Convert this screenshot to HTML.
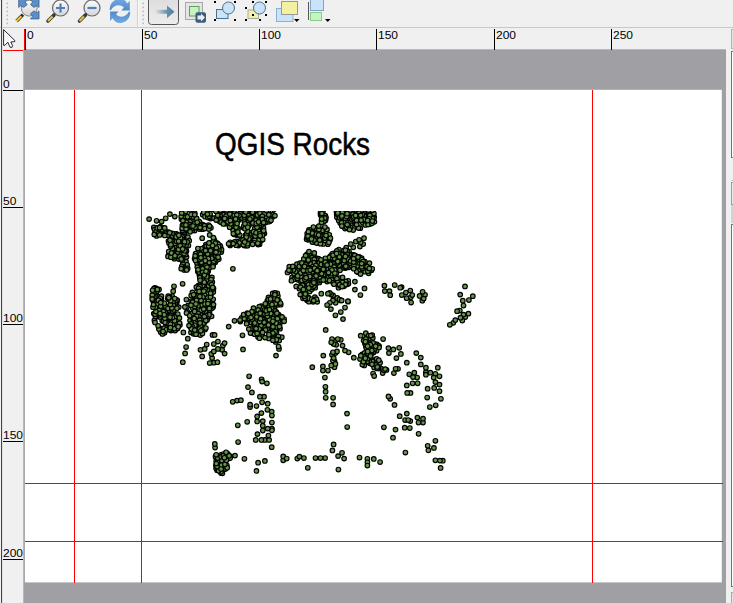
<!DOCTYPE html>
<html><head><meta charset="utf-8"><title>QGIS Composer</title>
<style>
html,body{margin:0;padding:0;background:#f0f0f0;}
body{width:733px;height:603px;overflow:hidden;position:relative;font-family:"Liberation Sans",sans-serif;}
#root{position:absolute;left:0;top:0;width:733px;height:603px;overflow:hidden;background:#f0f0f0;}
.abs{position:absolute;}
.vt{position:absolute;top:29px;width:1px;height:21px;background:#000;}
.ht{position:absolute;left:3px;width:20px;height:1px;background:#000;}
.rl{position:absolute;font-size:12px;line-height:12px;color:#000;white-space:nowrap;transform-origin:0 100%;transform:scaleY(0.93);}
.guide{position:absolute;background:#f00;}
</style></head><body><div id="root">
<!-- toolbar -->
<div class="abs" style="left:0;top:0;width:733px;height:27px;background:#f0f0f0;"></div>
<div class="abs" style="left:0;top:27px;width:733px;height:1px;background:#c8c8c8;"></div>
<svg class="abs" style="left:0;top:0" width="733" height="28" viewBox="0 0 733 28">
<defs>
<linearGradient id="lens" x1="0" y1="0" x2="0" y2="1"><stop offset="0" stop-color="#fdfdfd"/><stop offset="1" stop-color="#d4d4d4"/></linearGradient>
<linearGradient id="btn" x1="0" y1="0" x2="0" y2="1"><stop offset="0" stop-color="#dcdcdc"/><stop offset="1" stop-color="#ececec"/></linearGradient>
<linearGradient id="arr" x1="0" y1="0" x2="1" y2="0"><stop offset="0" stop-color="#5b87a6" stop-opacity="0"/><stop offset="0.6" stop-color="#5b87a6" stop-opacity="0.9"/><stop offset="1" stop-color="#4f7d9e"/></linearGradient>
<linearGradient id="rf" gradientUnits="userSpaceOnUse" x1="0" y1="0" x2="0" y2="22"><stop offset="0" stop-color="#6ea6e0"/><stop offset="1" stop-color="#2f6cb6"/></linearGradient>
</defs>
<!-- grippers -->
<g><rect x="5.5" y="1.7" width="1.600" height="1.600" fill="#fbfbfb"/><rect x="6.3" y="2.5" width="1.700" height="1.700" fill="#bcbcbc"/><rect x="5.5" y="5.7" width="1.600" height="1.600" fill="#fbfbfb"/><rect x="6.3" y="6.5" width="1.700" height="1.700" fill="#bcbcbc"/><rect x="5.5" y="9.7" width="1.600" height="1.600" fill="#fbfbfb"/><rect x="6.3" y="10.5" width="1.700" height="1.700" fill="#bcbcbc"/><rect x="5.5" y="13.7" width="1.600" height="1.600" fill="#fbfbfb"/><rect x="6.3" y="14.5" width="1.700" height="1.700" fill="#bcbcbc"/><rect x="5.5" y="17.7" width="1.600" height="1.600" fill="#fbfbfb"/><rect x="6.3" y="18.5" width="1.700" height="1.700" fill="#bcbcbc"/><rect x="5.5" y="21.7" width="1.600" height="1.600" fill="#fbfbfb"/><rect x="6.3" y="22.5" width="1.700" height="1.700" fill="#bcbcbc"/><rect x="141.5" y="1.7" width="1.600" height="1.600" fill="#fbfbfb"/><rect x="142.3" y="2.5" width="1.700" height="1.700" fill="#bcbcbc"/><rect x="141.5" y="5.7" width="1.600" height="1.600" fill="#fbfbfb"/><rect x="142.3" y="6.5" width="1.700" height="1.700" fill="#bcbcbc"/><rect x="141.5" y="9.7" width="1.600" height="1.600" fill="#fbfbfb"/><rect x="142.3" y="10.5" width="1.700" height="1.700" fill="#bcbcbc"/><rect x="141.5" y="13.7" width="1.600" height="1.600" fill="#fbfbfb"/><rect x="142.3" y="14.5" width="1.700" height="1.700" fill="#bcbcbc"/><rect x="141.5" y="17.7" width="1.600" height="1.600" fill="#fbfbfb"/><rect x="142.3" y="18.5" width="1.700" height="1.700" fill="#bcbcbc"/><rect x="141.5" y="21.7" width="1.600" height="1.600" fill="#fbfbfb"/><rect x="142.3" y="22.5" width="1.700" height="1.700" fill="#bcbcbc"/></g>
<rect x="137" y="0" width="1" height="27" fill="#d0d0d0"/><rect x="138" y="0" width="1" height="27" fill="#fbfbfb"/>
<!-- zoom full -->
<g>
<circle cx="29.200" cy="8.200" r="7.900" fill="url(#lens)" stroke="#7a7a7a" stroke-width="0.900"/>
<g fill="#5f8fc6" stroke="#355f92" stroke-width="0.800" stroke-linejoin="round">
<path d="M18.700 7.400L20.900 5.500L23.700 7.400L27.200 4.600L25 1.900L27.200 -0.600L18.700 -0.600Z"/>
<path d="M39 7.400L36.800 5.500L34 7.400L30.500 4.600L32.700 1.900L30.500 -0.600L39 -0.600Z"/>
<path d="M39 10.900L36.800 12.800L34 10.900L30.500 13.700L32.700 16.400L30.500 18.900L39 18.900Z"/>
</g>
<path d="M23 14.600L16.600 21" stroke="#2a2a2a" stroke-width="3.400" stroke-linecap="butt"/>
<path d="M21.400 16.200L16.300 21.300" stroke="#f2c832" stroke-width="2" stroke-linecap="butt"/>
</g>
<!-- zoom in -->
<g>
<circle cx="60.500" cy="8" r="8" fill="url(#lens)" stroke="#6a6a6a" stroke-width="1.200"/>
<path d="M56 8h9M60.500 3.500v9" stroke="#4a7fc0" stroke-width="2.200"/>
<path d="M54 15L48 21" stroke="#3a3a3a" stroke-width="3.600" stroke-linecap="round"/>
<path d="M52.500 16.500L48 21" stroke="#e8c53a" stroke-width="2.200"/>
</g>
<!-- zoom out -->
<g>
<circle cx="92" cy="8" r="8" fill="url(#lens)" stroke="#6a6a6a" stroke-width="1.200"/>
<path d="M87.500 8h9" stroke="#4a7fc0" stroke-width="2.200"/>
<path d="M85.500 15L79.500 21" stroke="#3a3a3a" stroke-width="3.600" stroke-linecap="round"/>
<path d="M84 16.500L79.500 21" stroke="#e8c53a" stroke-width="2.200"/>
</g>
<!-- refresh -->
<g fill="url(#rf)">
<path id="rfa" d="M129.800 0.800L129.800 10.400L121.300 10.400L123.900 7.500C121.500 4.600 116.500 4.300 113.500 7C112.300 8 111.500 9.200 110.900 10.300L109.800 10C109.300 5 112.500 0 118.500 -1.200C122.500 -1.800 125.500 0 127.200 3.500Z"/>
<path d="M129.800 0.800L129.800 10.400L121.300 10.400L123.900 7.500C121.500 4.600 116.500 4.300 113.500 7C112.300 8 111.500 9.200 110.900 10.300L109.800 10C109.300 5 112.500 0 118.500 -1.200C122.500 -1.800 125.500 0 127.200 3.500Z" transform="rotate(180 119.950 10.900)"/>
</g>
<!-- pressed button -->
<rect x="148.500" y="-4" width="30" height="28.500" rx="3" ry="3" fill="url(#btn)" stroke="#555" stroke-width="1"/>
<path d="M155 9.800H167V5.500L174.500 11.800L167 18.200V13.800H155Z" fill="url(#arr)"/>
<!-- move content -->
<rect x="185.500" y="2.500" width="17" height="17" fill="#e4e4e4" stroke="#a8a8a8"/>
<rect x="189.500" y="6.500" width="9.500" height="9.500" fill="#c6f3c2" stroke="#5aa45a"/>
<rect x="195.500" y="12.200" width="10.500" height="10.500" rx="2" fill="#3b5c7a"/>
<path d="M197.500 15.500H201V13.500L205 17.500L201 21.500V19.500H197.500Z" fill="#e8eef2"/>
<!-- zoom all -->
<rect x="216.500" y="9.500" width="11.500" height="9" fill="#c9e4f8" stroke="#4c7090"/>
<circle cx="228.500" cy="8" r="6" fill="#c9e4f8" stroke="#4c7090"/>
<g fill="#000"><rect x="214" y="1" width="2" height="2"/><rect x="234" y="1" width="2" height="2"/><rect x="214" y="19" width="2" height="2"/><rect x="234" y="19" width="2" height="2"/></g>
<!-- zoom selection -->
<rect x="248" y="10" width="10.500" height="8.500" fill="#f3f0a2" stroke="#a9a9a9"/>
<circle cx="259.500" cy="8" r="6" fill="#c9e4f8" stroke="#4c7090"/>
<g fill="#000"><rect x="252" y="1" width="2" height="2"/><rect x="265" y="1" width="2" height="2"/><rect x="245" y="7" width="2" height="2"/><rect x="252" y="14" width="2" height="2"/><rect x="265" y="14" width="2" height="2"/><rect x="245" y="19" width="2" height="2"/><rect x="259" y="19" width="2" height="2"/></g>
<!-- raise -->
<rect x="276.500" y="8.500" width="16.500" height="13" fill="#c9e4f8" stroke="#8bb0d0"/>
<rect x="281.500" y="1.500" width="16" height="13" fill="#f3f0a2" stroke="#999"/>
<path d="M294 19h5.500l-2.750 3z" fill="#000"/>
<!-- align -->
<rect x="308" y="2" width="1" height="18" fill="#555"/>
<rect x="310.500" y="-2" width="13" height="12.500" fill="#c9e4f8" stroke="#7fa3c4"/>
<rect x="310.500" y="12.500" width="11" height="8" fill="#c6f3c2" stroke="#8c8"/>
<path d="M325 19h5.500l-2.750 3z" fill="#000"/>
</svg>

<!-- left edge line -->
<div class="abs" style="left:1px;top:0px;width:1px;height:603px;background:#444;"></div>
<div class="abs" style="left:2px;top:0px;width:1px;height:603px;background:#e0e0e0;"></div>

<!-- gray canvas + paper -->
<svg class="abs" style="left:0;top:0" width="733" height="603" viewBox="0 0 733 603">
<rect x="23.300" y="49.300" width="702.700" height="560" fill="#a0a0a4"/>
<rect x="24.900" y="89.800" width="696.900" height="492.600" fill="#fff"/>
</svg>

<!-- rulers -->
<div class="vt" style="left:25px"></div><div class="rl" style="left:27px;top:29px">0</div><div class="vt" style="left:142px"></div><div class="rl" style="left:144px;top:29px">50</div><div class="vt" style="left:259px"></div><div class="rl" style="left:261px;top:29px">100</div><div class="vt" style="left:376px"></div><div class="rl" style="left:378px;top:29px">150</div><div class="vt" style="left:494px"></div><div class="rl" style="left:496px;top:29px">200</div><div class="vt" style="left:611px"></div><div class="rl" style="left:613px;top:29px">250</div>
<div class="ht" style="top:90px"></div><div class="rl" style="left:3px;top:78px">0</div><div class="ht" style="top:207px"></div><div class="rl" style="left:3px;top:195px">50</div><div class="ht" style="top:324px"></div><div class="rl" style="left:3px;top:312px">100</div><div class="ht" style="top:441px"></div><div class="rl" style="left:3px;top:429px">150</div><div class="ht" style="top:559px"></div><div class="rl" style="left:3px;top:547px">200</div>
<div class="abs" style="left:24px;top:29px;width:1px;height:21px;background:#f00;"></div>
<div class="abs" style="left:3px;top:50px;width:20px;height:1px;background:#f00;"></div>

<!-- cursor icon -->
<svg class="abs" style="left:0px;top:26px" width="20" height="26" viewBox="0 26 20 26">
<path d="M3.600 29.600L3.600 45.300L5 45.300L7.800 42.200L10.100 47.300L12 47.300L12.600 45.600L10.800 42L14.800 41.600L14.800 40.500Z" fill="#fafafa" stroke="#1c1c34" stroke-width="0.950" stroke-linejoin="miter"/>
</svg>

<!-- guides -->
<div class="guide" style="left:74px;top:90px;width:1px;height:493px;"></div>
<div class="guide" style="left:141px;top:90px;width:1px;height:493px;"></div>
<div class="guide" style="left:592px;top:90px;width:1px;height:493px;"></div>
<div class="guide" style="left:25px;top:483px;width:698px;height:1px;"></div>
<div class="guide" style="left:25px;top:541px;width:698px;height:1px;"></div>

<!-- title -->
<div id="title" class="abs" style="left:215px;top:128px;font-size:31px;line-height:34px;color:#000;white-space:nowrap;transform-origin:0 0;transform:scaleX(0.9);-webkit-text-stroke:0.5px #000;">QGIS Rocks</div>

<!-- map -->
<svg class="abs" style="left:0;top:211px" width="733" height="280" viewBox="0 211 733 280">
<g fill="#66964a" stroke="#000" stroke-width="1.15"><circle cx="254.4" cy="232.8" r="2.3"/><circle cx="330.0" cy="278.3" r="2.3"/><circle cx="340.3" cy="218.3" r="2.3"/><circle cx="336.7" cy="214.4" r="2.3"/><circle cx="340.8" cy="339.8" r="2.3"/><circle cx="308.4" cy="290.0" r="2.3"/><circle cx="247.7" cy="211.2" r="2.3"/><circle cx="204.5" cy="311.4" r="2.3"/><circle cx="219.2" cy="464.0" r="2.3"/><circle cx="365.6" cy="361.2" r="2.3"/><circle cx="183.9" cy="236.7" r="2.3"/><circle cx="327.1" cy="269.7" r="2.3"/><circle cx="348.0" cy="301.7" r="2.3"/><circle cx="368.2" cy="355.3" r="2.3"/><circle cx="367.0" cy="212.5" r="2.3"/><circle cx="174.3" cy="258.7" r="2.3"/><circle cx="323.5" cy="229.2" r="2.3"/><circle cx="165.8" cy="308.5" r="2.3"/><circle cx="321.9" cy="233.1" r="2.3"/><circle cx="405.9" cy="292.5" r="2.3"/><circle cx="190.3" cy="229.7" r="2.3"/><circle cx="171.0" cy="235.0" r="2.3"/><circle cx="356.2" cy="256.2" r="2.3"/><circle cx="167.2" cy="315.5" r="2.3"/><circle cx="269.5" cy="217.6" r="2.3"/><circle cx="242.5" cy="335.3" r="2.3"/><circle cx="262.1" cy="313.9" r="2.3"/><circle cx="427.6" cy="388.7" r="2.3"/><circle cx="414.3" cy="372.7" r="2.3"/><circle cx="230.1" cy="242.3" r="2.3"/><circle cx="204.7" cy="322.3" r="2.3"/><circle cx="313.5" cy="229.2" r="2.3"/><circle cx="247.0" cy="221.0" r="2.3"/><circle cx="264.9" cy="439.9" r="2.3"/><circle cx="309.7" cy="255.4" r="2.3"/><circle cx="314.2" cy="271.7" r="2.3"/><circle cx="173.0" cy="243.7" r="2.3"/><circle cx="261.2" cy="306.1" r="2.3"/><circle cx="228.7" cy="326.6" r="2.3"/><circle cx="199.1" cy="248.9" r="2.3"/><circle cx="255.0" cy="220.9" r="2.3"/><circle cx="257.1" cy="416.4" r="2.3"/><circle cx="292.1" cy="277.3" r="2.3"/><circle cx="153.7" cy="291.7" r="2.3"/><circle cx="316.3" cy="283.3" r="2.3"/><circle cx="271.7" cy="411.6" r="2.3"/><circle cx="268.5" cy="297.4" r="2.3"/><circle cx="272.8" cy="296.5" r="2.3"/><circle cx="182.6" cy="242.8" r="2.3"/><circle cx="195.7" cy="318.1" r="2.3"/><circle cx="221.3" cy="252.1" r="2.3"/><circle cx="323.5" cy="233.6" r="2.3"/><circle cx="158.6" cy="229.9" r="2.3"/><circle cx="248.0" cy="321.0" r="2.3"/><circle cx="222.6" cy="217.2" r="2.3"/><circle cx="348.0" cy="211.0" r="2.3"/><circle cx="267.3" cy="300.9" r="2.3"/><circle cx="389.5" cy="291.1" r="2.3"/><circle cx="260.0" cy="328.0" r="2.3"/><circle cx="219.5" cy="469.5" r="2.3"/><circle cx="267.4" cy="409.8" r="2.3"/><circle cx="337.1" cy="266.1" r="2.3"/><circle cx="362.8" cy="222.8" r="2.3"/><circle cx="254.3" cy="313.8" r="2.3"/><circle cx="262.3" cy="308.0" r="2.3"/><circle cx="213.3" cy="291.9" r="2.3"/><circle cx="425.9" cy="372.2" r="2.3"/><circle cx="172.2" cy="233.4" r="2.3"/><circle cx="344.1" cy="219.8" r="2.3"/><circle cx="265.5" cy="322.2" r="2.3"/><circle cx="334.8" cy="268.2" r="2.3"/><circle cx="312.6" cy="275.1" r="2.3"/><circle cx="185.1" cy="353.4" r="2.3"/><circle cx="262.4" cy="226.3" r="2.3"/><circle cx="202.7" cy="306.8" r="2.3"/><circle cx="160.4" cy="226.7" r="2.3"/><circle cx="301.3" cy="285.3" r="2.3"/><circle cx="384.8" cy="291.1" r="2.3"/><circle cx="411.1" cy="302.5" r="2.3"/><circle cx="266.0" cy="320.0" r="2.3"/><circle cx="251.7" cy="238.6" r="2.3"/><circle cx="213.8" cy="344.0" r="2.3"/><circle cx="437.8" cy="367.7" r="2.3"/><circle cx="208.0" cy="310.3" r="2.3"/><circle cx="173.7" cy="257.0" r="2.3"/><circle cx="213.1" cy="307.0" r="2.3"/><circle cx="453.3" cy="322.8" r="2.3"/><circle cx="153.8" cy="227.4" r="2.3"/><circle cx="281.2" cy="320.3" r="2.3"/><circle cx="368.7" cy="213.8" r="2.3"/><circle cx="317.1" cy="235.2" r="2.3"/><circle cx="207.8" cy="305.9" r="2.3"/><circle cx="201.4" cy="264.2" r="2.3"/><circle cx="241.7" cy="317.9" r="2.3"/><circle cx="342.7" cy="257.2" r="2.3"/><circle cx="472.8" cy="296.2" r="2.3"/><circle cx="374.9" cy="359.7" r="2.3"/><circle cx="295.0" cy="278.1" r="2.3"/><circle cx="320.8" cy="238.3" r="2.3"/><circle cx="181.5" cy="235.6" r="2.3"/><circle cx="201.9" cy="252.2" r="2.3"/><circle cx="163.0" cy="227.8" r="2.3"/><circle cx="264.0" cy="396.7" r="2.3"/><circle cx="179.3" cy="247.6" r="2.3"/><circle cx="267.6" cy="302.4" r="2.3"/><circle cx="325.1" cy="458.0" r="2.3"/><circle cx="274.2" cy="323.5" r="2.3"/><circle cx="381.2" cy="368.7" r="2.3"/><circle cx="248.7" cy="225.6" r="2.3"/><circle cx="335.3" cy="275.9" r="2.3"/><circle cx="258.2" cy="317.8" r="2.3"/><circle cx="212.1" cy="358.1" r="2.3"/><circle cx="331.4" cy="266.8" r="2.3"/><circle cx="278.2" cy="325.8" r="2.3"/><circle cx="468.9" cy="300.0" r="2.3"/><circle cx="356.5" cy="210.9" r="2.3"/><circle cx="253.2" cy="312.5" r="2.3"/><circle cx="190.0" cy="320.6" r="2.3"/><circle cx="215.1" cy="447.6" r="2.3"/><circle cx="254.9" cy="331.6" r="2.3"/><circle cx="283.2" cy="460.3" r="2.3"/><circle cx="215.3" cy="262.2" r="2.3"/><circle cx="337.4" cy="209.8" r="2.3"/><circle cx="274.0" cy="339.0" r="2.3"/><circle cx="347.8" cy="252.4" r="2.3"/><circle cx="168.1" cy="306.8" r="2.3"/><circle cx="401.6" cy="287.1" r="2.3"/><circle cx="185.6" cy="247.6" r="2.3"/><circle cx="194.6" cy="258.6" r="2.3"/><circle cx="170.3" cy="243.4" r="2.3"/><circle cx="251.5" cy="240.2" r="2.3"/><circle cx="238.4" cy="245.6" r="2.3"/><circle cx="333.0" cy="261.5" r="2.3"/><circle cx="248.9" cy="235.8" r="2.3"/><circle cx="315.2" cy="287.7" r="2.3"/><circle cx="200.7" cy="250.2" r="2.3"/><circle cx="340.0" cy="212.1" r="2.3"/><circle cx="342.0" cy="261.4" r="2.3"/><circle cx="347.2" cy="427.0" r="2.3"/><circle cx="334.5" cy="367.2" r="2.3"/><circle cx="197.8" cy="304.7" r="2.3"/><circle cx="359.3" cy="256.9" r="2.3"/><circle cx="270.0" cy="329.7" r="2.3"/><circle cx="163.9" cy="231.9" r="2.3"/><circle cx="270.3" cy="215.5" r="2.3"/><circle cx="240.3" cy="321.6" r="2.3"/><circle cx="322.9" cy="366.4" r="2.3"/><circle cx="271.7" cy="329.3" r="2.3"/><circle cx="219.0" cy="467.9" r="2.3"/><circle cx="321.2" cy="269.8" r="2.3"/><circle cx="245.1" cy="211.1" r="2.3"/><circle cx="174.1" cy="308.6" r="2.3"/><circle cx="256.4" cy="470.9" r="2.3"/><circle cx="202.7" cy="214.7" r="2.3"/><circle cx="198.5" cy="319.3" r="2.3"/><circle cx="272.0" cy="337.3" r="2.3"/><circle cx="275.0" cy="321.1" r="2.3"/><circle cx="178.6" cy="239.9" r="2.3"/><circle cx="401.8" cy="295.0" r="2.3"/><circle cx="254.9" cy="231.5" r="2.3"/><circle cx="360.7" cy="261.2" r="2.3"/><circle cx="341.4" cy="257.2" r="2.3"/><circle cx="346.2" cy="247.7" r="2.3"/><circle cx="245.1" cy="216.2" r="2.3"/><circle cx="201.3" cy="266.9" r="2.3"/><circle cx="185.8" cy="219.9" r="2.3"/><circle cx="348.7" cy="262.3" r="2.3"/><circle cx="378.7" cy="365.7" r="2.3"/><circle cx="159.0" cy="327.4" r="2.3"/><circle cx="167.8" cy="298.5" r="2.3"/><circle cx="303.9" cy="286.1" r="2.3"/><circle cx="430.4" cy="372.7" r="2.3"/><circle cx="209.3" cy="316.1" r="2.3"/><circle cx="350.8" cy="256.2" r="2.3"/><circle cx="343.5" cy="255.7" r="2.3"/><circle cx="323.0" cy="211.2" r="2.3"/><circle cx="203.0" cy="226.2" r="2.3"/><circle cx="325.5" cy="259.9" r="2.3"/><circle cx="273.2" cy="307.3" r="2.3"/><circle cx="337.2" cy="297.9" r="2.3"/><circle cx="205.8" cy="298.8" r="2.3"/><circle cx="340.6" cy="266.9" r="2.3"/><circle cx="200.7" cy="287.6" r="2.3"/><circle cx="278.6" cy="314.6" r="2.3"/><circle cx="376.9" cy="344.3" r="2.3"/><circle cx="186.5" cy="251.1" r="2.3"/><circle cx="246.9" cy="317.7" r="2.3"/><circle cx="167.5" cy="313.5" r="2.3"/><circle cx="314.1" cy="236.7" r="2.3"/><circle cx="208.0" cy="301.5" r="2.3"/><circle cx="357.4" cy="261.1" r="2.3"/><circle cx="244.8" cy="317.4" r="2.3"/><circle cx="259.0" cy="332.4" r="2.3"/><circle cx="234.5" cy="220.5" r="2.3"/><circle cx="310.1" cy="237.0" r="2.3"/><circle cx="319.6" cy="233.5" r="2.3"/><circle cx="246.3" cy="245.6" r="2.3"/><circle cx="251.1" cy="223.7" r="2.3"/><circle cx="195.7" cy="294.6" r="2.3"/><circle cx="312.5" cy="236.9" r="2.3"/><circle cx="236.7" cy="235.1" r="2.3"/><circle cx="162.2" cy="320.8" r="2.3"/><circle cx="188.5" cy="313.6" r="2.3"/><circle cx="175.3" cy="308.0" r="2.3"/><circle cx="259.6" cy="244.2" r="2.3"/><circle cx="365.8" cy="333.2" r="2.3"/><circle cx="462.8" cy="300.7" r="2.3"/><circle cx="170.2" cy="306.1" r="2.3"/><circle cx="250.6" cy="321.2" r="2.3"/><circle cx="173.3" cy="326.8" r="2.3"/><circle cx="207.6" cy="283.9" r="2.3"/><circle cx="356.9" cy="268.6" r="2.3"/><circle cx="210.6" cy="287.7" r="2.3"/><circle cx="357.2" cy="217.8" r="2.3"/><circle cx="358.2" cy="272.3" r="2.3"/><circle cx="303.3" cy="280.5" r="2.3"/><circle cx="206.6" cy="312.8" r="2.3"/><circle cx="196.1" cy="225.9" r="2.3"/><circle cx="235.8" cy="234.0" r="2.3"/><circle cx="357.3" cy="226.6" r="2.3"/><circle cx="315.6" cy="257.9" r="2.3"/><circle cx="276.3" cy="311.9" r="2.3"/><circle cx="268.8" cy="304.1" r="2.3"/><circle cx="465.3" cy="317.1" r="2.3"/><circle cx="237.0" cy="400.6" r="2.3"/><circle cx="359.9" cy="246.5" r="2.3"/><circle cx="306.2" cy="273.9" r="2.3"/><circle cx="348.2" cy="280.8" r="2.3"/><circle cx="234.9" cy="229.8" r="2.3"/><circle cx="221.4" cy="458.4" r="2.3"/><circle cx="347.6" cy="226.3" r="2.3"/><circle cx="257.7" cy="320.2" r="2.3"/><circle cx="186.0" cy="261.6" r="2.3"/><circle cx="192.4" cy="292.4" r="2.3"/><circle cx="324.3" cy="271.4" r="2.3"/><circle cx="236.6" cy="230.6" r="2.3"/><circle cx="232.6" cy="213.2" r="2.3"/><circle cx="296.4" cy="266.3" r="2.3"/><circle cx="217.1" cy="456.4" r="2.3"/><circle cx="204.0" cy="247.6" r="2.3"/><circle cx="160.9" cy="329.5" r="2.3"/><circle cx="238.8" cy="216.8" r="2.3"/><circle cx="303.0" cy="298.3" r="2.3"/><circle cx="351.0" cy="217.5" r="2.3"/><circle cx="251.5" cy="316.0" r="2.3"/><circle cx="169.8" cy="326.3" r="2.3"/><circle cx="307.0" cy="300.3" r="2.3"/><circle cx="374.1" cy="367.4" r="2.3"/><circle cx="308.9" cy="301.7" r="2.3"/><circle cx="349.5" cy="259.6" r="2.3"/><circle cx="330.6" cy="270.4" r="2.3"/><circle cx="164.5" cy="332.7" r="2.3"/><circle cx="319.4" cy="282.4" r="2.3"/><circle cx="324.5" cy="266.6" r="2.3"/><circle cx="278.3" cy="322.9" r="2.3"/><circle cx="199.2" cy="251.7" r="2.3"/><circle cx="357.9" cy="218.9" r="2.3"/><circle cx="220.4" cy="467.5" r="2.3"/><circle cx="334.0" cy="256.3" r="2.3"/><circle cx="352.4" cy="215.3" r="2.3"/><circle cx="227.8" cy="453.9" r="2.3"/><circle cx="203.4" cy="318.9" r="2.3"/><circle cx="319.5" cy="280.6" r="2.3"/><circle cx="187.9" cy="240.1" r="2.3"/><circle cx="184.3" cy="219.7" r="2.3"/><circle cx="252.3" cy="313.9" r="2.3"/><circle cx="374.4" cy="221.8" r="2.3"/><circle cx="276.5" cy="333.1" r="2.3"/><circle cx="259.2" cy="220.9" r="2.3"/><circle cx="305.3" cy="261.8" r="2.3"/><circle cx="293.7" cy="279.4" r="2.3"/><circle cx="335.4" cy="340.7" r="2.3"/><circle cx="394.7" cy="285.0" r="2.3"/><circle cx="366.9" cy="217.7" r="2.3"/><circle cx="370.6" cy="350.9" r="2.3"/><circle cx="340.0" cy="261.5" r="2.3"/><circle cx="312.3" cy="367.2" r="2.3"/><circle cx="174.5" cy="242.3" r="2.3"/><circle cx="184.6" cy="234.1" r="2.3"/><circle cx="188.4" cy="230.5" r="2.3"/><circle cx="197.3" cy="224.2" r="2.3"/><circle cx="336.5" cy="211.8" r="2.3"/><circle cx="382.7" cy="373.1" r="2.3"/><circle cx="211.7" cy="261.3" r="2.3"/><circle cx="168.6" cy="317.8" r="2.3"/><circle cx="315.1" cy="281.3" r="2.3"/><circle cx="167.0" cy="324.2" r="2.3"/><circle cx="157.1" cy="307.8" r="2.3"/><circle cx="168.5" cy="255.3" r="2.3"/><circle cx="343.4" cy="215.2" r="2.3"/><circle cx="206.1" cy="317.7" r="2.3"/><circle cx="232.6" cy="218.8" r="2.3"/><circle cx="348.8" cy="228.3" r="2.3"/><circle cx="354.9" cy="289.6" r="2.3"/><circle cx="274.9" cy="301.7" r="2.3"/><circle cx="278.5" cy="302.5" r="2.3"/><circle cx="306.8" cy="255.9" r="2.3"/><circle cx="313.5" cy="255.8" r="2.3"/><circle cx="333.7" cy="253.4" r="2.3"/><circle cx="180.3" cy="242.3" r="2.3"/><circle cx="244.6" cy="212.9" r="2.3"/><circle cx="194.7" cy="230.6" r="2.3"/><circle cx="317.2" cy="301.8" r="2.3"/><circle cx="364.9" cy="343.5" r="2.3"/><circle cx="327.4" cy="277.1" r="2.3"/><circle cx="309.8" cy="279.2" r="2.3"/><circle cx="237.8" cy="425.3" r="2.3"/><circle cx="244.4" cy="458.8" r="2.3"/><circle cx="223.0" cy="209.3" r="2.3"/><circle cx="187.1" cy="264.8" r="2.3"/><circle cx="263.5" cy="228.0" r="2.3"/><circle cx="175.3" cy="314.8" r="2.3"/><circle cx="208.2" cy="271.2" r="2.3"/><circle cx="154.5" cy="229.6" r="2.3"/><circle cx="183.2" cy="265.6" r="2.3"/><circle cx="214.1" cy="239.5" r="2.3"/><circle cx="211.9" cy="277.4" r="2.3"/><circle cx="297.9" cy="279.8" r="2.3"/><circle cx="232.7" cy="216.6" r="2.3"/><circle cx="417.4" cy="417.6" r="2.3"/><circle cx="455.3" cy="320.1" r="2.3"/><circle cx="316.9" cy="232.7" r="2.3"/><circle cx="265.8" cy="318.8" r="2.3"/><circle cx="182.8" cy="232.3" r="2.3"/><circle cx="376.6" cy="350.7" r="2.3"/><circle cx="266.6" cy="221.8" r="2.3"/><circle cx="259.9" cy="325.6" r="2.3"/><circle cx="304.8" cy="270.2" r="2.3"/><circle cx="221.8" cy="454.8" r="2.3"/><circle cx="175.7" cy="318.2" r="2.3"/><circle cx="177.7" cy="248.1" r="2.3"/><circle cx="340.5" cy="300.4" r="2.3"/><circle cx="208.0" cy="261.1" r="2.3"/><circle cx="225.3" cy="469.0" r="2.3"/><circle cx="198.4" cy="298.9" r="2.3"/><circle cx="168.0" cy="256.4" r="2.3"/><circle cx="273.5" cy="337.2" r="2.3"/><circle cx="187.9" cy="224.5" r="2.3"/><circle cx="191.0" cy="332.4" r="2.3"/><circle cx="261.0" cy="240.5" r="2.3"/><circle cx="223.1" cy="469.6" r="2.3"/><circle cx="354.9" cy="258.4" r="2.3"/><circle cx="167.3" cy="321.9" r="2.3"/><circle cx="300.6" cy="279.9" r="2.3"/><circle cx="362.9" cy="264.3" r="2.3"/><circle cx="258.0" cy="336.9" r="2.3"/><circle cx="320.5" cy="275.4" r="2.3"/><circle cx="313.0" cy="268.7" r="2.3"/><circle cx="209.4" cy="267.8" r="2.3"/><circle cx="160.6" cy="332.0" r="2.3"/><circle cx="169.6" cy="241.6" r="2.3"/><circle cx="246.4" cy="320.0" r="2.3"/><circle cx="352.0" cy="262.2" r="2.3"/><circle cx="220.0" cy="245.6" r="2.3"/><circle cx="171.1" cy="318.0" r="2.3"/><circle cx="310.5" cy="285.4" r="2.3"/><circle cx="238.0" cy="228.0" r="2.3"/><circle cx="356.0" cy="262.5" r="2.3"/><circle cx="266.0" cy="312.5" r="2.3"/><circle cx="207.3" cy="275.0" r="2.3"/><circle cx="259.3" cy="306.6" r="2.3"/><circle cx="343.6" cy="226.5" r="2.3"/><circle cx="393.0" cy="437.7" r="2.3"/><circle cx="332.0" cy="354.8" r="2.3"/><circle cx="311.4" cy="261.2" r="2.3"/><circle cx="171.1" cy="322.7" r="2.3"/><circle cx="194.5" cy="297.1" r="2.3"/><circle cx="257.4" cy="434.1" r="2.3"/><circle cx="267.7" cy="304.7" r="2.3"/><circle cx="344.1" cy="251.6" r="2.3"/><circle cx="331.2" cy="261.1" r="2.3"/><circle cx="373.1" cy="373.5" r="2.3"/><circle cx="332.2" cy="253.8" r="2.3"/><circle cx="264.9" cy="217.7" r="2.3"/><circle cx="269.7" cy="336.8" r="2.3"/><circle cx="370.0" cy="222.0" r="2.3"/><circle cx="372.2" cy="212.8" r="2.3"/><circle cx="207.3" cy="272.1" r="2.3"/><circle cx="296.9" cy="264.2" r="2.3"/><circle cx="308.1" cy="239.8" r="2.3"/><circle cx="207.5" cy="208.6" r="2.3"/><circle cx="181.4" cy="219.2" r="2.3"/><circle cx="211.2" cy="263.4" r="2.3"/><circle cx="255.4" cy="214.5" r="2.3"/><circle cx="256.0" cy="326.1" r="2.3"/><circle cx="201.4" cy="279.6" r="2.3"/><circle cx="373.8" cy="363.4" r="2.3"/><circle cx="177.8" cy="314.0" r="2.3"/><circle cx="378.4" cy="368.3" r="2.3"/><circle cx="215.3" cy="209.4" r="2.3"/><circle cx="218.4" cy="220.4" r="2.3"/><circle cx="398.0" cy="368.8" r="2.3"/><circle cx="206.9" cy="212.7" r="2.3"/><circle cx="417.6" cy="383.3" r="2.3"/><circle cx="201.1" cy="307.0" r="2.3"/><circle cx="171.5" cy="327.0" r="2.3"/><circle cx="390.2" cy="398.8" r="2.3"/><circle cx="370.0" cy="357.5" r="2.3"/><circle cx="364.9" cy="355.0" r="2.3"/><circle cx="369.4" cy="270.8" r="2.3"/><circle cx="222.1" cy="349.8" r="2.3"/><circle cx="217.1" cy="470.2" r="2.3"/><circle cx="262.5" cy="324.5" r="2.3"/><circle cx="322.9" cy="370.5" r="2.3"/><circle cx="274.5" cy="308.5" r="2.3"/><circle cx="200.9" cy="328.7" r="2.3"/><circle cx="258.7" cy="325.3" r="2.3"/><circle cx="290.5" cy="268.7" r="2.3"/><circle cx="261.6" cy="379.3" r="2.3"/><circle cx="263.9" cy="315.6" r="2.3"/><circle cx="253.5" cy="211.2" r="2.3"/><circle cx="219.5" cy="213.9" r="2.3"/><circle cx="252.9" cy="315.9" r="2.3"/><circle cx="333.1" cy="295.4" r="2.3"/><circle cx="264.6" cy="309.8" r="2.3"/><circle cx="325.6" cy="391.7" r="2.3"/><circle cx="268.3" cy="299.6" r="2.3"/><circle cx="210.6" cy="218.6" r="2.3"/><circle cx="208.1" cy="251.0" r="2.3"/><circle cx="373.8" cy="458.9" r="2.3"/><circle cx="185.8" cy="210.1" r="2.3"/><circle cx="201.2" cy="310.2" r="2.3"/><circle cx="435.4" cy="440.8" r="2.3"/><circle cx="216.2" cy="460.9" r="2.3"/><circle cx="333.6" cy="444.4" r="2.3"/><circle cx="258.6" cy="234.4" r="2.3"/><circle cx="366.4" cy="219.3" r="2.3"/><circle cx="261.3" cy="315.7" r="2.3"/><circle cx="258.6" cy="230.6" r="2.3"/><circle cx="309.9" cy="286.9" r="2.3"/><circle cx="193.5" cy="333.8" r="2.3"/><circle cx="258.4" cy="226.8" r="2.3"/><circle cx="159.0" cy="289.4" r="2.3"/><circle cx="238.8" cy="220.0" r="2.3"/><circle cx="369.9" cy="224.1" r="2.3"/><circle cx="262.1" cy="381.6" r="2.3"/><circle cx="283.2" cy="456.4" r="2.3"/><circle cx="212.3" cy="282.1" r="2.3"/><circle cx="352.7" cy="263.6" r="2.3"/><circle cx="315.5" cy="458.0" r="2.3"/><circle cx="358.0" cy="270.1" r="2.3"/><circle cx="375.5" cy="344.3" r="2.3"/><circle cx="311.9" cy="257.7" r="2.3"/><circle cx="345.0" cy="307.5" r="2.3"/><circle cx="211.3" cy="353.9" r="2.3"/><circle cx="292.2" cy="271.3" r="2.3"/><circle cx="349.0" cy="251.7" r="2.3"/><circle cx="427.2" cy="397.5" r="2.3"/><circle cx="296.9" cy="268.5" r="2.3"/><circle cx="320.6" cy="215.0" r="2.3"/><circle cx="246.7" cy="219.9" r="2.3"/><circle cx="208.1" cy="317.7" r="2.3"/><circle cx="222.2" cy="213.0" r="2.3"/><circle cx="280.0" cy="328.7" r="2.3"/><circle cx="272.4" cy="312.7" r="2.3"/><circle cx="360.3" cy="228.2" r="2.3"/><circle cx="264.4" cy="233.5" r="2.3"/><circle cx="267.7" cy="403.7" r="2.3"/><circle cx="171.7" cy="254.8" r="2.3"/><circle cx="176.3" cy="305.5" r="2.3"/><circle cx="330.3" cy="272.5" r="2.3"/><circle cx="300.8" cy="281.6" r="2.3"/><circle cx="308.4" cy="262.9" r="2.3"/><circle cx="264.9" cy="314.1" r="2.3"/><circle cx="221.1" cy="220.3" r="2.3"/><circle cx="317.4" cy="267.7" r="2.3"/><circle cx="272.7" cy="310.6" r="2.3"/><circle cx="322.8" cy="230.4" r="2.3"/><circle cx="465.0" cy="286.4" r="2.3"/><circle cx="213.5" cy="254.9" r="2.3"/><circle cx="267.6" cy="307.3" r="2.3"/><circle cx="195.4" cy="328.2" r="2.3"/><circle cx="405.1" cy="420.0" r="2.3"/><circle cx="315.9" cy="230.2" r="2.3"/><circle cx="183.6" cy="215.4" r="2.3"/><circle cx="348.6" cy="216.7" r="2.3"/><circle cx="315.9" cy="262.6" r="2.3"/><circle cx="358.5" cy="268.9" r="2.3"/><circle cx="423.0" cy="422.5" r="2.3"/><circle cx="348.8" cy="267.3" r="2.3"/><circle cx="274.7" cy="312.5" r="2.3"/><circle cx="217.9" cy="341.5" r="2.3"/><circle cx="256.4" cy="236.0" r="2.3"/><circle cx="154.9" cy="287.8" r="2.3"/><circle cx="261.0" cy="225.5" r="2.3"/><circle cx="338.5" cy="217.6" r="2.3"/><circle cx="325.3" cy="215.6" r="2.3"/><circle cx="163.5" cy="321.3" r="2.3"/><circle cx="318.5" cy="258.6" r="2.3"/><circle cx="194.8" cy="213.3" r="2.3"/><circle cx="298.5" cy="269.5" r="2.3"/><circle cx="341.2" cy="263.8" r="2.3"/><circle cx="308.9" cy="229.9" r="2.3"/><circle cx="197.1" cy="256.8" r="2.3"/><circle cx="198.5" cy="305.7" r="2.3"/><circle cx="262.1" cy="402.3" r="2.3"/><circle cx="197.9" cy="332.5" r="2.3"/><circle cx="218.1" cy="460.2" r="2.3"/><circle cx="208.4" cy="290.0" r="2.3"/><circle cx="339.9" cy="213.9" r="2.3"/><circle cx="280.7" cy="319.2" r="2.3"/><circle cx="342.3" cy="285.3" r="2.3"/><circle cx="338.9" cy="249.5" r="2.3"/><circle cx="162.3" cy="231.8" r="2.3"/><circle cx="154.0" cy="305.6" r="2.3"/><circle cx="205.9" cy="244.5" r="2.3"/><circle cx="342.9" cy="218.5" r="2.3"/><circle cx="283.1" cy="320.4" r="2.3"/><circle cx="356.2" cy="258.0" r="2.3"/><circle cx="281.8" cy="337.2" r="2.3"/><circle cx="321.3" cy="293.7" r="2.3"/><circle cx="217.3" cy="243.0" r="2.3"/><circle cx="256.9" cy="217.8" r="2.3"/><circle cx="219.9" cy="457.2" r="2.3"/><circle cx="261.2" cy="213.2" r="2.3"/><circle cx="154.1" cy="294.9" r="2.3"/><circle cx="210.9" cy="227.8" r="2.3"/><circle cx="232.4" cy="227.9" r="2.3"/><circle cx="368.6" cy="211.9" r="2.3"/><circle cx="342.7" cy="264.3" r="2.3"/><circle cx="247.4" cy="315.6" r="2.3"/><circle cx="175.1" cy="330.5" r="2.3"/><circle cx="268.8" cy="307.2" r="2.3"/><circle cx="263.1" cy="319.5" r="2.3"/><circle cx="186.4" cy="223.8" r="2.3"/><circle cx="251.0" cy="331.6" r="2.3"/><circle cx="335.4" cy="353.1" r="2.3"/><circle cx="239.7" cy="214.1" r="2.3"/><circle cx="176.8" cy="326.2" r="2.3"/><circle cx="187.9" cy="305.5" r="2.3"/><circle cx="271.9" cy="428.6" r="2.3"/><circle cx="327.3" cy="237.5" r="2.3"/><circle cx="192.6" cy="329.5" r="2.3"/><circle cx="287.5" cy="272.4" r="2.3"/><circle cx="294.1" cy="273.7" r="2.3"/><circle cx="209.2" cy="261.0" r="2.3"/><circle cx="233.2" cy="230.5" r="2.3"/><circle cx="230.6" cy="456.4" r="2.3"/><circle cx="348.1" cy="259.3" r="2.3"/><circle cx="284.1" cy="319.0" r="2.3"/><circle cx="220.5" cy="462.5" r="2.3"/><circle cx="245.5" cy="235.2" r="2.3"/><circle cx="197.1" cy="314.4" r="2.3"/><circle cx="191.8" cy="220.7" r="2.3"/><circle cx="211.6" cy="316.3" r="2.3"/><circle cx="251.3" cy="328.3" r="2.3"/><circle cx="269.1" cy="439.9" r="2.3"/><circle cx="182.6" cy="254.0" r="2.3"/><circle cx="234.2" cy="224.3" r="2.3"/><circle cx="322.3" cy="209.7" r="2.3"/><circle cx="177.4" cy="236.1" r="2.3"/><circle cx="268.2" cy="331.0" r="2.3"/><circle cx="279.9" cy="316.4" r="2.3"/><circle cx="321.1" cy="280.0" r="2.3"/><circle cx="203.2" cy="283.2" r="2.3"/><circle cx="185.3" cy="218.0" r="2.3"/><circle cx="277.7" cy="327.8" r="2.3"/><circle cx="175.9" cy="246.3" r="2.3"/><circle cx="177.1" cy="254.8" r="2.3"/><circle cx="463.5" cy="314.6" r="2.3"/><circle cx="211.0" cy="300.5" r="2.3"/><circle cx="315.5" cy="272.0" r="2.3"/><circle cx="157.2" cy="309.9" r="2.3"/><circle cx="184.5" cy="256.7" r="2.3"/><circle cx="278.4" cy="336.5" r="2.3"/><circle cx="335.6" cy="302.8" r="2.3"/><circle cx="331.0" cy="276.2" r="2.3"/><circle cx="198.7" cy="325.4" r="2.3"/><circle cx="410.3" cy="421.1" r="2.3"/><circle cx="361.6" cy="258.2" r="2.3"/><circle cx="252.3" cy="235.5" r="2.3"/><circle cx="410.7" cy="297.3" r="2.3"/><circle cx="203.8" cy="273.2" r="2.3"/><circle cx="388.9" cy="353.1" r="2.3"/><circle cx="272.5" cy="325.4" r="2.3"/><circle cx="192.2" cy="230.4" r="2.3"/><circle cx="186.5" cy="257.1" r="2.3"/><circle cx="343.6" cy="263.4" r="2.3"/><circle cx="344.1" cy="458.6" r="2.3"/><circle cx="198.3" cy="285.5" r="2.3"/><circle cx="172.7" cy="324.6" r="2.3"/><circle cx="188.1" cy="219.9" r="2.3"/><circle cx="295.7" cy="271.6" r="2.3"/><circle cx="302.3" cy="277.5" r="2.3"/><circle cx="323.3" cy="243.9" r="2.3"/><circle cx="191.2" cy="295.6" r="2.3"/><circle cx="173.5" cy="316.7" r="2.3"/><circle cx="215.0" cy="246.9" r="2.3"/><circle cx="309.7" cy="283.3" r="2.3"/><circle cx="237.8" cy="229.5" r="2.3"/><circle cx="230.3" cy="221.8" r="2.3"/><circle cx="161.7" cy="305.4" r="2.3"/><circle cx="205.7" cy="280.9" r="2.3"/><circle cx="191.2" cy="301.1" r="2.3"/><circle cx="433.9" cy="447.9" r="2.3"/><circle cx="301.4" cy="274.7" r="2.3"/><circle cx="170.9" cy="309.0" r="2.3"/><circle cx="226.8" cy="465.3" r="2.3"/><circle cx="211.0" cy="308.7" r="2.3"/><circle cx="156.0" cy="288.4" r="2.3"/><circle cx="173.6" cy="249.8" r="2.3"/><circle cx="165.7" cy="327.3" r="2.3"/><circle cx="213.8" cy="362.7" r="2.3"/><circle cx="172.7" cy="236.0" r="2.3"/><circle cx="223.5" cy="216.0" r="2.3"/><circle cx="184.3" cy="221.8" r="2.3"/><circle cx="220.5" cy="246.8" r="2.3"/><circle cx="204.1" cy="280.3" r="2.3"/><circle cx="216.0" cy="249.8" r="2.3"/><circle cx="250.0" cy="315.2" r="2.3"/><circle cx="251.8" cy="215.0" r="2.3"/><circle cx="331.6" cy="279.8" r="2.3"/><circle cx="202.5" cy="229.2" r="2.3"/><circle cx="340.2" cy="222.9" r="2.3"/><circle cx="254.1" cy="326.2" r="2.3"/><circle cx="289.3" cy="266.7" r="2.3"/><circle cx="206.7" cy="300.9" r="2.3"/><circle cx="202.8" cy="288.0" r="2.3"/><circle cx="247.2" cy="421.8" r="2.3"/><circle cx="250.8" cy="236.2" r="2.3"/><circle cx="344.1" cy="214.2" r="2.3"/><circle cx="184.2" cy="269.9" r="2.3"/><circle cx="334.6" cy="260.7" r="2.3"/><circle cx="183.4" cy="332.4" r="2.3"/><circle cx="352.7" cy="214.1" r="2.3"/><circle cx="203.9" cy="255.0" r="2.3"/><circle cx="268.1" cy="320.3" r="2.3"/><circle cx="374.2" cy="217.0" r="2.3"/><circle cx="365.6" cy="222.8" r="2.3"/><circle cx="364.3" cy="365.4" r="2.3"/><circle cx="206.3" cy="246.1" r="2.3"/><circle cx="320.5" cy="212.9" r="2.3"/><circle cx="303.1" cy="290.8" r="2.3"/><circle cx="372.6" cy="361.5" r="2.3"/><circle cx="184.7" cy="238.8" r="2.3"/><circle cx="153.8" cy="313.6" r="2.3"/><circle cx="333.1" cy="282.8" r="2.3"/><circle cx="373.9" cy="218.2" r="2.3"/><circle cx="313.8" cy="242.2" r="2.3"/><circle cx="242.2" cy="215.2" r="2.3"/><circle cx="200.2" cy="272.8" r="2.3"/><circle cx="195.5" cy="310.5" r="2.3"/><circle cx="217.4" cy="211.4" r="2.3"/><circle cx="362.2" cy="354.4" r="2.3"/><circle cx="459.8" cy="310.5" r="2.3"/><circle cx="340.8" cy="209.6" r="2.3"/><circle cx="276.4" cy="298.1" r="2.3"/><circle cx="182.6" cy="214.7" r="2.3"/><circle cx="364.5" cy="288.4" r="2.3"/><circle cx="264.9" cy="460.9" r="2.3"/><circle cx="259.5" cy="225.6" r="2.3"/><circle cx="386.5" cy="369.9" r="2.3"/><circle cx="199.7" cy="285.2" r="2.3"/><circle cx="348.6" cy="352.3" r="2.3"/><circle cx="270.6" cy="301.8" r="2.3"/><circle cx="280.0" cy="322.7" r="2.3"/><circle cx="217.9" cy="348.9" r="2.3"/><circle cx="348.4" cy="283.8" r="2.3"/><circle cx="336.8" cy="267.9" r="2.3"/><circle cx="363.2" cy="244.0" r="2.3"/><circle cx="307.1" cy="254.1" r="2.3"/><circle cx="293.4" cy="269.9" r="2.3"/><circle cx="311.9" cy="235.3" r="2.3"/><circle cx="247.8" cy="214.2" r="2.3"/><circle cx="257.3" cy="332.1" r="2.3"/><circle cx="237.3" cy="220.6" r="2.3"/><circle cx="202.8" cy="224.6" r="2.3"/><circle cx="224.9" cy="460.9" r="2.3"/><circle cx="224.9" cy="223.4" r="2.3"/><circle cx="364.0" cy="238.2" r="2.3"/><circle cx="253.0" cy="221.5" r="2.3"/><circle cx="331.2" cy="273.7" r="2.3"/><circle cx="223.7" cy="459.8" r="2.3"/><circle cx="325.2" cy="220.6" r="2.3"/><circle cx="253.6" cy="321.9" r="2.3"/><circle cx="343.0" cy="319.1" r="2.3"/><circle cx="228.7" cy="458.4" r="2.3"/><circle cx="233.4" cy="212.3" r="2.3"/><circle cx="156.4" cy="308.8" r="2.3"/><circle cx="182.2" cy="237.0" r="2.3"/><circle cx="159.8" cy="316.9" r="2.3"/><circle cx="272.7" cy="216.7" r="2.3"/><circle cx="318.0" cy="237.5" r="2.3"/><circle cx="193.4" cy="217.0" r="2.3"/><circle cx="246.7" cy="233.9" r="2.3"/><circle cx="212.3" cy="256.5" r="2.3"/><circle cx="275.8" cy="325.8" r="2.3"/><circle cx="175.5" cy="238.6" r="2.3"/><circle cx="169.6" cy="299.7" r="2.3"/><circle cx="345.7" cy="281.4" r="2.3"/><circle cx="296.2" cy="286.4" r="2.3"/><circle cx="309.7" cy="291.4" r="2.3"/><circle cx="200.3" cy="335.0" r="2.3"/><circle cx="345.4" cy="215.8" r="2.3"/><circle cx="379.0" cy="345.9" r="2.3"/><circle cx="192.1" cy="317.1" r="2.3"/><circle cx="206.6" cy="280.0" r="2.3"/><circle cx="317.0" cy="263.9" r="2.3"/><circle cx="311.3" cy="229.8" r="2.3"/><circle cx="369.4" cy="263.2" r="2.3"/><circle cx="367.4" cy="458.8" r="2.3"/><circle cx="326.8" cy="240.5" r="2.3"/><circle cx="334.5" cy="361.4" r="2.3"/><circle cx="311.8" cy="260.0" r="2.3"/><circle cx="345.0" cy="350.6" r="2.3"/><circle cx="195.8" cy="301.7" r="2.3"/><circle cx="199.4" cy="274.8" r="2.3"/><circle cx="346.7" cy="284.4" r="2.3"/><circle cx="237.7" cy="241.6" r="2.3"/><circle cx="153.9" cy="288.6" r="2.3"/><circle cx="199.6" cy="229.1" r="2.3"/><circle cx="332.9" cy="300.4" r="2.3"/><circle cx="194.7" cy="315.0" r="2.3"/><circle cx="360.6" cy="265.7" r="2.3"/><circle cx="260.8" cy="211.8" r="2.3"/><circle cx="199.1" cy="321.9" r="2.3"/><circle cx="236.1" cy="227.2" r="2.3"/><circle cx="190.0" cy="221.7" r="2.3"/><circle cx="197.6" cy="261.2" r="2.3"/><circle cx="258.3" cy="213.5" r="2.3"/><circle cx="245.9" cy="226.6" r="2.3"/><circle cx="210.7" cy="216.9" r="2.3"/><circle cx="196.8" cy="317.4" r="2.3"/><circle cx="338.7" cy="269.0" r="2.3"/><circle cx="202.2" cy="238.2" r="2.3"/><circle cx="363.1" cy="265.6" r="2.3"/><circle cx="372.1" cy="216.1" r="2.3"/><circle cx="327.2" cy="281.5" r="2.3"/><circle cx="255.6" cy="330.0" r="2.3"/><circle cx="261.7" cy="233.4" r="2.3"/><circle cx="254.7" cy="228.6" r="2.3"/><circle cx="219.8" cy="221.4" r="2.3"/><circle cx="309.2" cy="235.2" r="2.3"/><circle cx="323.6" cy="273.1" r="2.3"/><circle cx="206.3" cy="256.0" r="2.3"/><circle cx="272.8" cy="334.4" r="2.3"/><circle cx="329.9" cy="261.1" r="2.3"/><circle cx="326.4" cy="231.5" r="2.3"/><circle cx="184.2" cy="232.2" r="2.3"/><circle cx="409.8" cy="428.0" r="2.3"/><circle cx="317.3" cy="277.4" r="2.3"/><circle cx="373.9" cy="213.5" r="2.3"/><circle cx="221.0" cy="473.0" r="2.3"/><circle cx="338.5" cy="287.7" r="2.3"/><circle cx="376.4" cy="363.1" r="2.3"/><circle cx="208.7" cy="302.6" r="2.3"/><circle cx="368.7" cy="348.4" r="2.3"/><circle cx="364.7" cy="352.9" r="2.3"/><circle cx="167.4" cy="233.1" r="2.3"/><circle cx="177.6" cy="328.6" r="2.3"/><circle cx="435.4" cy="373.8" r="2.3"/><circle cx="234.5" cy="234.4" r="2.3"/><circle cx="240.8" cy="242.1" r="2.3"/><circle cx="161.8" cy="311.1" r="2.3"/><circle cx="166.1" cy="318.4" r="2.3"/><circle cx="309.0" cy="251.6" r="2.3"/><circle cx="252.2" cy="332.9" r="2.3"/><circle cx="206.8" cy="276.7" r="2.3"/><circle cx="240.9" cy="400.2" r="2.3"/><circle cx="215.5" cy="456.7" r="2.3"/><circle cx="343.9" cy="250.4" r="2.3"/><circle cx="306.8" cy="272.3" r="2.3"/><circle cx="244.2" cy="318.6" r="2.3"/><circle cx="277.8" cy="304.8" r="2.3"/><circle cx="170.9" cy="257.2" r="2.3"/><circle cx="199.8" cy="222.7" r="2.3"/><circle cx="155.8" cy="290.2" r="2.3"/><circle cx="442.8" cy="460.7" r="2.3"/><circle cx="342.6" cy="221.4" r="2.3"/><circle cx="200.9" cy="326.9" r="2.3"/><circle cx="347.2" cy="253.6" r="2.3"/><circle cx="304.6" cy="274.0" r="2.3"/><circle cx="188.4" cy="245.5" r="2.3"/><circle cx="276.4" cy="321.5" r="2.3"/><circle cx="249.1" cy="376.3" r="2.3"/><circle cx="156.3" cy="293.7" r="2.3"/><circle cx="406.8" cy="385.4" r="2.3"/><circle cx="250.7" cy="242.3" r="2.3"/><circle cx="212.5" cy="334.9" r="2.3"/><circle cx="274.5" cy="326.7" r="2.3"/><circle cx="468.4" cy="313.7" r="2.3"/><circle cx="181.8" cy="246.1" r="2.3"/><circle cx="425.9" cy="367.7" r="2.3"/><circle cx="185.6" cy="216.1" r="2.3"/><circle cx="308.8" cy="233.4" r="2.3"/><circle cx="255.2" cy="222.6" r="2.3"/><circle cx="316.0" cy="259.1" r="2.3"/><circle cx="199.5" cy="263.9" r="2.3"/><circle cx="372.5" cy="218.5" r="2.3"/><circle cx="208.4" cy="300.1" r="2.3"/><circle cx="371.5" cy="270.2" r="2.3"/><circle cx="164.9" cy="232.9" r="2.3"/><circle cx="203.1" cy="299.5" r="2.3"/><circle cx="250.5" cy="333.0" r="2.3"/><circle cx="165.0" cy="230.8" r="2.3"/><circle cx="183.9" cy="214.1" r="2.3"/><circle cx="224.6" cy="353.6" r="2.3"/><circle cx="311.7" cy="289.3" r="2.3"/><circle cx="266.8" cy="215.4" r="2.3"/><circle cx="165.3" cy="306.1" r="2.3"/><circle cx="181.5" cy="250.3" r="2.3"/><circle cx="332.9" cy="360.6" r="2.3"/><circle cx="210.5" cy="258.7" r="2.3"/><circle cx="197.5" cy="259.7" r="2.3"/><circle cx="303.2" cy="288.0" r="2.3"/><circle cx="177.9" cy="252.2" r="2.3"/><circle cx="182.4" cy="225.4" r="2.3"/><circle cx="271.4" cy="215.9" r="2.3"/><circle cx="351.7" cy="254.6" r="2.3"/><circle cx="202.7" cy="286.0" r="2.3"/><circle cx="211.1" cy="279.5" r="2.3"/><circle cx="258.1" cy="462.7" r="2.3"/><circle cx="369.7" cy="363.2" r="2.3"/><circle cx="165.9" cy="313.2" r="2.3"/><circle cx="338.1" cy="456.1" r="2.3"/><circle cx="380.1" cy="462.0" r="2.3"/><circle cx="181.3" cy="248.6" r="2.3"/><circle cx="238.2" cy="234.2" r="2.3"/><circle cx="203.9" cy="298.1" r="2.3"/><circle cx="290.4" cy="270.8" r="2.3"/><circle cx="353.8" cy="357.7" r="2.3"/><circle cx="228.1" cy="213.1" r="2.3"/><circle cx="338.3" cy="267.7" r="2.3"/><circle cx="314.3" cy="259.4" r="2.3"/><circle cx="353.6" cy="254.8" r="2.3"/><circle cx="356.7" cy="271.5" r="2.3"/><circle cx="312.8" cy="271.8" r="2.3"/><circle cx="204.2" cy="306.2" r="2.3"/><circle cx="323.9" cy="235.9" r="2.3"/><circle cx="323.7" cy="265.3" r="2.3"/><circle cx="183.8" cy="230.8" r="2.3"/><circle cx="227.6" cy="219.5" r="2.3"/><circle cx="253.5" cy="308.1" r="2.3"/><circle cx="187.7" cy="268.4" r="2.3"/><circle cx="268.1" cy="211.7" r="2.3"/><circle cx="217.9" cy="463.0" r="2.3"/><circle cx="252.5" cy="212.3" r="2.3"/><circle cx="336.2" cy="344.8" r="2.3"/><circle cx="324.5" cy="274.5" r="2.3"/><circle cx="360.6" cy="274.0" r="2.3"/><circle cx="199.6" cy="225.2" r="2.3"/><circle cx="260.5" cy="322.7" r="2.3"/><circle cx="256.0" cy="220.1" r="2.3"/><circle cx="162.1" cy="329.2" r="2.3"/><circle cx="203.7" cy="258.9" r="2.3"/><circle cx="199.7" cy="276.2" r="2.3"/><circle cx="329.9" cy="239.9" r="2.3"/><circle cx="270.8" cy="316.1" r="2.3"/><circle cx="272.7" cy="293.4" r="2.3"/><circle cx="238.1" cy="442.0" r="2.3"/><circle cx="238.6" cy="244.3" r="2.3"/><circle cx="327.0" cy="229.4" r="2.3"/><circle cx="174.0" cy="233.8" r="2.3"/><circle cx="314.2" cy="276.9" r="2.3"/><circle cx="358.5" cy="228.0" r="2.3"/><circle cx="286.7" cy="458.5" r="2.3"/><circle cx="165.2" cy="322.4" r="2.3"/><circle cx="261.9" cy="335.5" r="2.3"/><circle cx="306.9" cy="281.9" r="2.3"/><circle cx="300.8" cy="276.5" r="2.3"/><circle cx="186.0" cy="245.5" r="2.3"/><circle cx="372.8" cy="337.9" r="2.3"/><circle cx="184.1" cy="240.5" r="2.3"/><circle cx="168.4" cy="314.7" r="2.3"/><circle cx="158.8" cy="305.3" r="2.3"/><circle cx="178.0" cy="319.6" r="2.3"/><circle cx="365.2" cy="271.7" r="2.3"/><circle cx="301.1" cy="266.3" r="2.3"/><circle cx="164.1" cy="328.2" r="2.3"/><circle cx="250.3" cy="217.7" r="2.3"/><circle cx="317.4" cy="241.1" r="2.3"/><circle cx="425.0" cy="294.8" r="2.3"/><circle cx="201.4" cy="274.0" r="2.3"/><circle cx="358.8" cy="212.9" r="2.3"/><circle cx="201.3" cy="316.4" r="2.3"/><circle cx="198.2" cy="265.8" r="2.3"/><circle cx="301.2" cy="267.8" r="2.3"/><circle cx="244.4" cy="239.5" r="2.3"/><circle cx="212.4" cy="259.7" r="2.3"/><circle cx="257.1" cy="314.6" r="2.3"/><circle cx="200.5" cy="349.8" r="2.3"/><circle cx="192.6" cy="228.0" r="2.3"/><circle cx="329.3" cy="234.8" r="2.3"/><circle cx="207.6" cy="297.1" r="2.3"/><circle cx="371.5" cy="342.0" r="2.3"/><circle cx="310.7" cy="232.4" r="2.3"/><circle cx="248.2" cy="215.4" r="2.3"/><circle cx="218.9" cy="461.7" r="2.3"/><circle cx="217.2" cy="254.9" r="2.3"/><circle cx="209.5" cy="313.0" r="2.3"/><circle cx="358.7" cy="215.7" r="2.3"/><circle cx="380.1" cy="362.7" r="2.3"/><circle cx="274.1" cy="310.1" r="2.3"/><circle cx="207.1" cy="319.9" r="2.3"/><circle cx="336.9" cy="217.2" r="2.3"/><circle cx="208.7" cy="285.8" r="2.3"/><circle cx="352.9" cy="222.9" r="2.3"/><circle cx="178.5" cy="249.5" r="2.3"/><circle cx="273.7" cy="209.6" r="2.3"/><circle cx="230.1" cy="245.4" r="2.3"/><circle cx="195.1" cy="323.9" r="2.3"/><circle cx="313.1" cy="301.8" r="2.3"/><circle cx="360.3" cy="266.9" r="2.3"/><circle cx="228.8" cy="223.0" r="2.3"/><circle cx="260.4" cy="214.7" r="2.3"/><circle cx="204.6" cy="294.5" r="2.3"/><circle cx="204.3" cy="282.2" r="2.3"/><circle cx="349.1" cy="219.2" r="2.3"/><circle cx="274.4" cy="319.1" r="2.3"/><circle cx="227.8" cy="208.9" r="2.3"/><circle cx="366.8" cy="337.9" r="2.3"/><circle cx="167.0" cy="311.3" r="2.3"/><circle cx="428.4" cy="450.3" r="2.3"/><circle cx="354.4" cy="260.5" r="2.3"/><circle cx="258.6" cy="240.1" r="2.3"/><circle cx="364.0" cy="213.1" r="2.3"/><circle cx="171.0" cy="330.5" r="2.3"/><circle cx="182.4" cy="230.2" r="2.3"/><circle cx="314.9" cy="297.1" r="2.3"/><circle cx="435.7" cy="405.3" r="2.3"/><circle cx="303.8" cy="258.9" r="2.3"/><circle cx="190.4" cy="314.1" r="2.3"/><circle cx="306.6" cy="239.2" r="2.3"/><circle cx="271.7" cy="309.5" r="2.3"/><circle cx="190.9" cy="315.2" r="2.3"/><circle cx="406.6" cy="298.2" r="2.3"/><circle cx="189.9" cy="209.5" r="2.3"/><circle cx="313.9" cy="262.6" r="2.3"/><circle cx="197.3" cy="288.7" r="2.3"/><circle cx="321.9" cy="267.9" r="2.3"/><circle cx="271.7" cy="447.2" r="2.3"/><circle cx="360.6" cy="213.2" r="2.3"/><circle cx="312.7" cy="231.5" r="2.3"/><circle cx="374.2" cy="376.0" r="2.3"/><circle cx="210.0" cy="256.0" r="2.3"/><circle cx="202.4" cy="333.5" r="2.3"/><circle cx="249.5" cy="319.7" r="2.3"/><circle cx="292.8" cy="266.4" r="2.3"/><circle cx="315.0" cy="228.6" r="2.3"/><circle cx="169.7" cy="311.8" r="2.3"/><circle cx="211.7" cy="242.6" r="2.3"/><circle cx="252.9" cy="222.9" r="2.3"/><circle cx="169.4" cy="310.5" r="2.3"/><circle cx="217.5" cy="461.6" r="2.3"/><circle cx="332.1" cy="257.1" r="2.3"/><circle cx="336.6" cy="271.7" r="2.3"/><circle cx="187.9" cy="237.2" r="2.3"/><circle cx="366.7" cy="340.8" r="2.3"/><circle cx="276.0" cy="319.6" r="2.3"/><circle cx="207.6" cy="316.5" r="2.3"/><circle cx="268.9" cy="216.5" r="2.3"/><circle cx="368.4" cy="359.5" r="2.3"/><circle cx="224.7" cy="465.9" r="2.3"/><circle cx="348.7" cy="221.3" r="2.3"/><circle cx="173.2" cy="291.2" r="2.3"/><circle cx="235.9" cy="217.1" r="2.3"/><circle cx="217.4" cy="362.2" r="2.3"/><circle cx="262.7" cy="239.5" r="2.3"/><circle cx="318.9" cy="242.7" r="2.3"/><circle cx="272.5" cy="314.4" r="2.3"/><circle cx="314.3" cy="252.9" r="2.3"/><circle cx="209.7" cy="234.9" r="2.3"/><circle cx="203.8" cy="301.0" r="2.3"/><circle cx="221.7" cy="214.7" r="2.3"/><circle cx="178.8" cy="307.1" r="2.3"/><circle cx="377.1" cy="368.4" r="2.3"/><circle cx="335.4" cy="315.3" r="2.3"/><circle cx="332.4" cy="450.4" r="2.3"/><circle cx="232.9" cy="268.8" r="2.3"/><circle cx="258.1" cy="309.9" r="2.3"/><circle cx="409.3" cy="374.3" r="2.3"/><circle cx="249.2" cy="240.9" r="2.3"/><circle cx="187.6" cy="216.8" r="2.3"/><circle cx="304.6" cy="291.1" r="2.3"/><circle cx="339.5" cy="299.5" r="2.3"/><circle cx="249.8" cy="322.6" r="2.3"/><circle cx="202.2" cy="305.1" r="2.3"/><circle cx="247.1" cy="218.1" r="2.3"/><circle cx="198.9" cy="257.9" r="2.3"/><circle cx="254.7" cy="240.2" r="2.3"/><circle cx="158.5" cy="297.0" r="2.3"/><circle cx="197.8" cy="271.5" r="2.3"/><circle cx="182.9" cy="263.3" r="2.3"/><circle cx="178.8" cy="259.1" r="2.3"/><circle cx="168.0" cy="308.5" r="2.3"/><circle cx="319.9" cy="235.7" r="2.3"/><circle cx="212.0" cy="307.9" r="2.3"/><circle cx="344.2" cy="260.6" r="2.3"/><circle cx="271.9" cy="430.3" r="2.3"/><circle cx="221.6" cy="467.1" r="2.3"/><circle cx="186.1" cy="347.0" r="2.3"/><circle cx="169.0" cy="323.8" r="2.3"/><circle cx="227.5" cy="457.8" r="2.3"/><circle cx="366.7" cy="354.6" r="2.3"/><circle cx="343.9" cy="286.3" r="2.3"/><circle cx="360.1" cy="218.1" r="2.3"/><circle cx="266.8" cy="309.4" r="2.3"/><circle cx="199.0" cy="272.1" r="2.3"/><circle cx="186.5" cy="222.3" r="2.3"/><circle cx="202.5" cy="263.5" r="2.3"/><circle cx="330.3" cy="256.2" r="2.3"/><circle cx="247.1" cy="208.9" r="2.3"/><circle cx="372.2" cy="335.0" r="2.3"/><circle cx="205.0" cy="216.7" r="2.3"/><circle cx="179.6" cy="243.5" r="2.3"/><circle cx="368.6" cy="335.6" r="2.3"/><circle cx="241.1" cy="210.8" r="2.3"/><circle cx="214.0" cy="218.2" r="2.3"/><circle cx="325.1" cy="240.5" r="2.3"/><circle cx="221.9" cy="460.5" r="2.3"/><circle cx="360.7" cy="242.3" r="2.3"/><circle cx="231.5" cy="225.4" r="2.3"/><circle cx="156.1" cy="231.6" r="2.3"/><circle cx="156.6" cy="235.9" r="2.3"/><circle cx="162.4" cy="333.9" r="2.3"/><circle cx="327.8" cy="259.4" r="2.3"/><circle cx="270.6" cy="317.9" r="2.3"/><circle cx="156.3" cy="304.0" r="2.3"/><circle cx="174.4" cy="328.6" r="2.3"/><circle cx="240.9" cy="243.9" r="2.3"/><circle cx="161.4" cy="298.6" r="2.3"/><circle cx="218.3" cy="244.3" r="2.3"/><circle cx="182.2" cy="228.3" r="2.3"/><circle cx="242.1" cy="218.0" r="2.3"/><circle cx="213.6" cy="263.3" r="2.3"/><circle cx="345.1" cy="228.5" r="2.3"/><circle cx="278.5" cy="320.6" r="2.3"/><circle cx="157.3" cy="227.9" r="2.3"/><circle cx="169.9" cy="214.1" r="2.3"/><circle cx="191.1" cy="214.5" r="2.3"/><circle cx="248.9" cy="239.0" r="2.3"/><circle cx="353.4" cy="257.3" r="2.3"/><circle cx="252.3" cy="232.6" r="2.3"/><circle cx="210.1" cy="283.0" r="2.3"/><circle cx="223.6" cy="222.8" r="2.3"/><circle cx="427.7" cy="445.8" r="2.3"/><circle cx="236.2" cy="232.2" r="2.3"/><circle cx="374.1" cy="350.5" r="2.3"/><circle cx="206.7" cy="344.5" r="2.3"/><circle cx="218.0" cy="219.0" r="2.3"/><circle cx="243.0" cy="349.4" r="2.3"/><circle cx="156.9" cy="316.6" r="2.3"/><circle cx="263.3" cy="214.7" r="2.3"/><circle cx="250.6" cy="232.7" r="2.3"/><circle cx="243.6" cy="314.5" r="2.3"/><circle cx="359.5" cy="457.5" r="2.3"/><circle cx="337.0" cy="351.4" r="2.3"/><circle cx="186.8" cy="307.3" r="2.3"/><circle cx="262.8" cy="430.5" r="2.3"/><circle cx="326.0" cy="217.5" r="2.3"/><circle cx="273.8" cy="315.4" r="2.3"/><circle cx="259.9" cy="396.7" r="2.3"/><circle cx="307.0" cy="299.0" r="2.3"/><circle cx="329.2" cy="262.9" r="2.3"/><circle cx="174.9" cy="317.2" r="2.3"/><circle cx="159.3" cy="314.7" r="2.3"/><circle cx="365.3" cy="224.9" r="2.3"/><circle cx="259.6" cy="223.5" r="2.3"/><circle cx="440.9" cy="398.8" r="2.3"/><circle cx="379.1" cy="347.4" r="2.3"/><circle cx="251.3" cy="208.5" r="2.3"/><circle cx="226.1" cy="223.6" r="2.3"/><circle cx="181.9" cy="244.6" r="2.3"/><circle cx="192.9" cy="308.5" r="2.3"/><circle cx="364.8" cy="261.6" r="2.3"/><circle cx="288.9" cy="270.2" r="2.3"/><circle cx="350.7" cy="221.9" r="2.3"/><circle cx="200.2" cy="314.8" r="2.3"/><circle cx="410.5" cy="392.9" r="2.3"/><circle cx="360.4" cy="295.0" r="2.3"/><circle cx="185.7" cy="254.6" r="2.3"/><circle cx="244.4" cy="245.6" r="2.3"/><circle cx="373.1" cy="345.7" r="2.3"/><circle cx="339.2" cy="265.2" r="2.3"/><circle cx="197.0" cy="263.3" r="2.3"/><circle cx="354.7" cy="255.4" r="2.3"/><circle cx="222.4" cy="473.3" r="2.3"/><circle cx="376.7" cy="360.6" r="2.3"/><circle cx="337.8" cy="270.0" r="2.3"/><circle cx="272.7" cy="329.9" r="2.3"/><circle cx="198.1" cy="252.4" r="2.3"/><circle cx="210.9" cy="295.0" r="2.3"/><circle cx="305.0" cy="263.7" r="2.3"/><circle cx="213.7" cy="261.7" r="2.3"/><circle cx="273.0" cy="318.6" r="2.3"/><circle cx="279.4" cy="325.3" r="2.3"/><circle cx="313.4" cy="227.0" r="2.3"/><circle cx="158.9" cy="329.1" r="2.3"/><circle cx="324.8" cy="238.0" r="2.3"/><circle cx="183.0" cy="241.0" r="2.3"/><circle cx="172.2" cy="310.2" r="2.3"/><circle cx="212.9" cy="265.3" r="2.3"/><circle cx="331.2" cy="294.6" r="2.3"/><circle cx="258.9" cy="334.6" r="2.3"/><circle cx="264.1" cy="216.3" r="2.3"/><circle cx="198.3" cy="267.8" r="2.3"/><circle cx="325.7" cy="397.8" r="2.3"/><circle cx="330.4" cy="238.2" r="2.3"/><circle cx="368.1" cy="224.6" r="2.3"/><circle cx="312.3" cy="287.3" r="2.3"/><circle cx="271.9" cy="415.5" r="2.3"/><circle cx="268.8" cy="338.4" r="2.3"/><circle cx="365.8" cy="346.1" r="2.3"/><circle cx="198.2" cy="313.5" r="2.3"/><circle cx="296.9" cy="277.0" r="2.3"/><circle cx="332.9" cy="352.3" r="2.3"/><circle cx="152.4" cy="296.7" r="2.3"/><circle cx="172.2" cy="251.9" r="2.3"/><circle cx="313.0" cy="278.5" r="2.3"/><circle cx="276.4" cy="315.1" r="2.3"/><circle cx="340.5" cy="281.5" r="2.3"/><circle cx="172.5" cy="248.4" r="2.3"/><circle cx="353.2" cy="230.0" r="2.3"/><circle cx="307.8" cy="467.8" r="2.3"/><circle cx="328.1" cy="263.5" r="2.3"/><circle cx="154.3" cy="298.8" r="2.3"/><circle cx="214.6" cy="240.8" r="2.3"/><circle cx="339.7" cy="253.9" r="2.3"/><circle cx="345.4" cy="268.1" r="2.3"/><circle cx="216.0" cy="465.4" r="2.3"/><circle cx="278.0" cy="339.7" r="2.3"/><circle cx="340.0" cy="278.0" r="2.3"/><circle cx="205.0" cy="289.4" r="2.3"/><circle cx="336.9" cy="278.8" r="2.3"/><circle cx="257.1" cy="421.4" r="2.3"/><circle cx="228.2" cy="214.7" r="2.3"/><circle cx="355.9" cy="266.9" r="2.3"/><circle cx="158.1" cy="325.8" r="2.3"/><circle cx="186.1" cy="228.8" r="2.3"/><circle cx="185.6" cy="211.6" r="2.3"/><circle cx="275.4" cy="303.8" r="2.3"/><circle cx="353.3" cy="247.3" r="2.3"/><circle cx="205.1" cy="329.4" r="2.3"/><circle cx="318.9" cy="229.4" r="2.3"/><circle cx="207.8" cy="217.5" r="2.3"/><circle cx="333.1" cy="397.8" r="2.3"/><circle cx="310.0" cy="263.2" r="2.3"/><circle cx="262.8" cy="425.7" r="2.3"/><circle cx="304.1" cy="269.0" r="2.3"/><circle cx="250.1" cy="407.0" r="2.3"/><circle cx="176.9" cy="302.0" r="2.3"/><circle cx="301.9" cy="280.5" r="2.3"/><circle cx="217.7" cy="458.0" r="2.3"/><circle cx="274.7" cy="298.5" r="2.3"/><circle cx="367.2" cy="266.7" r="2.3"/><circle cx="462.3" cy="320.5" r="2.3"/><circle cx="376.0" cy="365.0" r="2.3"/><circle cx="350.9" cy="225.3" r="2.3"/><circle cx="219.2" cy="212.2" r="2.3"/><circle cx="236.4" cy="241.3" r="2.3"/><circle cx="217.3" cy="251.9" r="2.3"/><circle cx="213.2" cy="299.3" r="2.3"/><circle cx="200.1" cy="262.6" r="2.3"/><circle cx="257.5" cy="330.9" r="2.3"/><circle cx="422.3" cy="300.7" r="2.3"/><circle cx="248.7" cy="218.5" r="2.3"/><circle cx="266.0" cy="328.6" r="2.3"/><circle cx="198.5" cy="226.8" r="2.3"/><circle cx="369.2" cy="361.7" r="2.3"/><circle cx="260.2" cy="313.2" r="2.3"/><circle cx="277.9" cy="296.0" r="2.3"/><circle cx="211.5" cy="289.9" r="2.3"/><circle cx="200.0" cy="286.6" r="2.3"/><circle cx="212.9" cy="209.2" r="2.3"/><circle cx="303.9" cy="458.0" r="2.3"/><circle cx="314.7" cy="299.6" r="2.3"/><circle cx="322.3" cy="270.9" r="2.3"/><circle cx="194.5" cy="306.6" r="2.3"/><circle cx="176.4" cy="233.8" r="2.3"/><circle cx="347.0" cy="250.7" r="2.3"/><circle cx="247.3" cy="313.1" r="2.3"/><circle cx="404.7" cy="427.7" r="2.3"/><circle cx="195.7" cy="298.2" r="2.3"/><circle cx="154.4" cy="320.4" r="2.3"/><circle cx="339.4" cy="216.6" r="2.3"/><circle cx="308.0" cy="297.2" r="2.3"/><circle cx="263.1" cy="232.7" r="2.3"/><circle cx="308.8" cy="298.2" r="2.3"/><circle cx="203.8" cy="320.1" r="2.3"/><circle cx="154.3" cy="234.4" r="2.3"/><circle cx="266.2" cy="325.8" r="2.3"/><circle cx="257.4" cy="215.0" r="2.3"/><circle cx="367.1" cy="361.4" r="2.3"/><circle cx="329.2" cy="257.5" r="2.3"/><circle cx="203.2" cy="323.5" r="2.3"/><circle cx="373.5" cy="352.5" r="2.3"/><circle cx="422.6" cy="291.8" r="2.3"/><circle cx="305.9" cy="289.3" r="2.3"/><circle cx="227.8" cy="456.1" r="2.3"/><circle cx="384.0" cy="370.3" r="2.3"/><circle cx="172.8" cy="311.4" r="2.3"/><circle cx="352.1" cy="266.3" r="2.3"/><circle cx="194.7" cy="223.5" r="2.3"/><circle cx="256.8" cy="317.0" r="2.3"/><circle cx="171.7" cy="306.1" r="2.3"/><circle cx="266.2" cy="218.3" r="2.3"/><circle cx="161.4" cy="296.2" r="2.3"/><circle cx="303.6" cy="292.4" r="2.3"/><circle cx="192.9" cy="209.0" r="2.3"/><circle cx="175.4" cy="302.9" r="2.3"/><circle cx="186.4" cy="299.5" r="2.3"/><circle cx="279.0" cy="348.9" r="2.3"/><circle cx="334.8" cy="262.5" r="2.3"/><circle cx="400.9" cy="353.9" r="2.3"/><circle cx="357.7" cy="266.0" r="2.3"/><circle cx="155.7" cy="313.1" r="2.3"/><circle cx="313.7" cy="280.9" r="2.3"/><circle cx="155.4" cy="316.3" r="2.3"/><circle cx="460.5" cy="317.7" r="2.3"/><circle cx="302.2" cy="294.4" r="2.3"/><circle cx="341.6" cy="284.1" r="2.3"/><circle cx="282.0" cy="316.9" r="2.3"/><circle cx="160.2" cy="298.3" r="2.3"/><circle cx="199.3" cy="260.5" r="2.3"/><circle cx="215.5" cy="255.2" r="2.3"/><circle cx="201.3" cy="248.8" r="2.3"/><circle cx="201.4" cy="256.2" r="2.3"/><circle cx="197.3" cy="267.1" r="2.3"/><circle cx="270.5" cy="298.9" r="2.3"/><circle cx="208.9" cy="262.4" r="2.3"/><circle cx="440.6" cy="467.9" r="2.3"/><circle cx="174.0" cy="310.1" r="2.3"/><circle cx="321.1" cy="212.5" r="2.3"/><circle cx="241.2" cy="239.6" r="2.3"/><circle cx="355.8" cy="241.5" r="2.3"/><circle cx="370.8" cy="335.6" r="2.3"/><circle cx="324.1" cy="219.6" r="2.3"/><circle cx="320.1" cy="266.3" r="2.3"/><circle cx="343.5" cy="267.8" r="2.3"/><circle cx="221.5" cy="249.7" r="2.3"/><circle cx="423.7" cy="298.6" r="2.3"/><circle cx="269.8" cy="221.2" r="2.3"/><circle cx="216.9" cy="217.4" r="2.3"/><circle cx="407.2" cy="392.9" r="2.3"/><circle cx="319.8" cy="276.9" r="2.3"/><circle cx="372.2" cy="268.8" r="2.3"/><circle cx="395.5" cy="429.6" r="2.3"/><circle cx="417.1" cy="377.5" r="2.3"/><circle cx="265.3" cy="303.8" r="2.3"/><circle cx="268.6" cy="221.7" r="2.3"/><circle cx="396.4" cy="358.1" r="2.3"/><circle cx="280.7" cy="304.7" r="2.3"/><circle cx="211.6" cy="284.6" r="2.3"/><circle cx="224.3" cy="214.2" r="2.3"/><circle cx="371.9" cy="223.3" r="2.3"/><circle cx="219.0" cy="249.8" r="2.3"/><circle cx="166.3" cy="329.8" r="2.3"/><circle cx="327.9" cy="244.2" r="2.3"/><circle cx="258.0" cy="326.4" r="2.3"/><circle cx="341.7" cy="300.4" r="2.3"/><circle cx="325.6" cy="219.9" r="2.3"/><circle cx="217.1" cy="259.8" r="2.3"/><circle cx="214.6" cy="334.9" r="2.3"/><circle cx="190.4" cy="325.7" r="2.3"/><circle cx="449.8" cy="324.8" r="2.3"/><circle cx="364.2" cy="215.6" r="2.3"/><circle cx="364.2" cy="360.5" r="2.3"/><circle cx="319.3" cy="262.8" r="2.3"/><circle cx="257.0" cy="227.2" r="2.3"/><circle cx="204.1" cy="251.3" r="2.3"/><circle cx="205.0" cy="304.0" r="2.3"/><circle cx="362.4" cy="214.4" r="2.3"/><circle cx="196.1" cy="323.1" r="2.3"/><circle cx="181.8" cy="266.3" r="2.3"/><circle cx="316.1" cy="234.1" r="2.3"/><circle cx="333.7" cy="358.1" r="2.3"/><circle cx="371.8" cy="352.3" r="2.3"/><circle cx="383.9" cy="427.3" r="2.3"/><circle cx="195.1" cy="326.7" r="2.3"/><circle cx="157.5" cy="313.5" r="2.3"/><circle cx="203.7" cy="309.1" r="2.3"/><circle cx="330.8" cy="268.0" r="2.3"/><circle cx="200.7" cy="269.4" r="2.3"/><circle cx="271.7" cy="307.8" r="2.3"/><circle cx="321.6" cy="220.3" r="2.3"/><circle cx="338.4" cy="469.5" r="2.3"/><circle cx="256.4" cy="406.0" r="2.3"/><circle cx="300.1" cy="263.0" r="2.3"/><circle cx="208.0" cy="257.3" r="2.3"/><circle cx="334.6" cy="263.8" r="2.3"/><circle cx="341.8" cy="280.9" r="2.3"/><circle cx="234.5" cy="213.1" r="2.3"/><circle cx="276.0" cy="355.6" r="2.3"/><circle cx="168.6" cy="232.1" r="2.3"/><circle cx="291.4" cy="280.7" r="2.3"/><circle cx="198.8" cy="254.3" r="2.3"/><circle cx="388.5" cy="396.4" r="2.3"/><circle cx="435.4" cy="460.3" r="2.3"/><circle cx="342.0" cy="452.8" r="2.3"/><circle cx="228.7" cy="211.9" r="2.3"/><circle cx="262.2" cy="211.7" r="2.3"/><circle cx="165.9" cy="234.0" r="2.3"/><circle cx="340.9" cy="213.8" r="2.3"/><circle cx="222.9" cy="345.6" r="2.3"/><circle cx="355.4" cy="223.9" r="2.3"/><circle cx="335.4" cy="363.9" r="2.3"/><circle cx="221.1" cy="222.3" r="2.3"/><circle cx="178.5" cy="245.1" r="2.3"/><circle cx="366.3" cy="348.1" r="2.3"/><circle cx="209.0" cy="314.7" r="2.3"/><circle cx="230.8" cy="210.9" r="2.3"/><circle cx="316.9" cy="272.1" r="2.3"/><circle cx="197.9" cy="248.5" r="2.3"/><circle cx="346.3" cy="222.5" r="2.3"/><circle cx="165.0" cy="312.3" r="2.3"/><circle cx="168.7" cy="251.5" r="2.3"/><circle cx="337.4" cy="263.0" r="2.3"/><circle cx="200.1" cy="227.6" r="2.3"/><circle cx="158.6" cy="233.4" r="2.3"/><circle cx="240.3" cy="212.9" r="2.3"/><circle cx="312.3" cy="242.0" r="2.3"/><circle cx="333.7" cy="344.0" r="2.3"/><circle cx="338.0" cy="214.7" r="2.3"/><circle cx="359.9" cy="263.5" r="2.3"/><circle cx="434.2" cy="387.9" r="2.3"/><circle cx="350.1" cy="262.9" r="2.3"/><circle cx="305.1" cy="298.3" r="2.3"/><circle cx="157.8" cy="304.1" r="2.3"/><circle cx="328.9" cy="242.4" r="2.3"/><circle cx="179.9" cy="325.0" r="2.3"/><circle cx="172.2" cy="241.7" r="2.3"/><circle cx="266.5" cy="212.6" r="2.3"/><circle cx="439.9" cy="460.6" r="2.3"/><circle cx="324.9" cy="377.5" r="2.3"/><circle cx="167.6" cy="235.2" r="2.3"/><circle cx="207.9" cy="210.7" r="2.3"/><circle cx="324.0" cy="221.3" r="2.3"/><circle cx="350.8" cy="244.0" r="2.3"/><circle cx="213.2" cy="241.4" r="2.3"/><circle cx="224.6" cy="343.1" r="2.3"/><circle cx="275.6" cy="341.9" r="2.3"/><circle cx="406.8" cy="413.6" r="2.3"/><circle cx="265.9" cy="216.6" r="2.3"/><circle cx="394.5" cy="404.9" r="2.3"/><circle cx="226.1" cy="216.0" r="2.3"/><circle cx="316.7" cy="243.1" r="2.3"/><circle cx="325.4" cy="386.8" r="2.3"/><circle cx="167.3" cy="316.9" r="2.3"/><circle cx="234.1" cy="215.2" r="2.3"/><circle cx="212.0" cy="251.8" r="2.3"/><circle cx="152.7" cy="300.3" r="2.3"/><circle cx="155.5" cy="296.4" r="2.3"/><circle cx="463.5" cy="305.5" r="2.3"/><circle cx="204.7" cy="268.9" r="2.3"/><circle cx="351.9" cy="219.5" r="2.3"/><circle cx="345.1" cy="213.3" r="2.3"/><circle cx="275.8" cy="324.5" r="2.3"/><circle cx="393.9" cy="373.0" r="2.3"/><circle cx="363.6" cy="340.6" r="2.3"/><circle cx="321.9" cy="263.2" r="2.3"/><circle cx="264.3" cy="213.9" r="2.3"/><circle cx="254.3" cy="242.8" r="2.3"/><circle cx="279.2" cy="340.6" r="2.3"/><circle cx="159.2" cy="310.5" r="2.3"/><circle cx="311.6" cy="269.2" r="2.3"/><circle cx="209.6" cy="209.4" r="2.3"/><circle cx="183.1" cy="252.5" r="2.3"/><circle cx="395.6" cy="368.8" r="2.3"/><circle cx="201.6" cy="319.0" r="2.3"/><circle cx="239.7" cy="242.7" r="2.3"/><circle cx="160.7" cy="306.3" r="2.3"/><circle cx="360.7" cy="335.7" r="2.3"/><circle cx="174.6" cy="320.7" r="2.3"/><circle cx="266.9" cy="383.3" r="2.3"/><circle cx="169.7" cy="329.5" r="2.3"/><circle cx="240.4" cy="209.7" r="2.3"/><circle cx="196.8" cy="296.9" r="2.3"/><circle cx="243.5" cy="227.7" r="2.3"/><circle cx="269.4" cy="319.8" r="2.3"/><circle cx="335.1" cy="266.1" r="2.3"/><circle cx="343.1" cy="284.1" r="2.3"/><circle cx="423.0" cy="418.7" r="2.3"/><circle cx="244.2" cy="217.1" r="2.3"/><circle cx="164.8" cy="318.3" r="2.3"/><circle cx="332.0" cy="339.0" r="2.3"/><circle cx="297.3" cy="458.5" r="2.3"/><circle cx="353.9" cy="265.3" r="2.3"/><circle cx="413.0" cy="377.1" r="2.3"/><circle cx="202.2" cy="328.5" r="2.3"/><circle cx="208.1" cy="255.5" r="2.3"/><circle cx="338.7" cy="220.4" r="2.3"/><circle cx="202.8" cy="297.0" r="2.3"/><circle cx="360.2" cy="269.6" r="2.3"/><circle cx="211.0" cy="306.4" r="2.3"/><circle cx="316.5" cy="299.2" r="2.3"/><circle cx="193.2" cy="321.9" r="2.3"/><circle cx="181.1" cy="255.0" r="2.3"/><circle cx="226.8" cy="211.7" r="2.3"/><circle cx="202.8" cy="268.7" r="2.3"/><circle cx="198.7" cy="294.3" r="2.3"/><circle cx="262.4" cy="235.2" r="2.3"/><circle cx="365.8" cy="338.9" r="2.3"/><circle cx="196.3" cy="287.1" r="2.3"/><circle cx="341.3" cy="254.4" r="2.3"/><circle cx="325.3" cy="258.3" r="2.3"/><circle cx="162.3" cy="229.8" r="2.3"/><circle cx="170.6" cy="315.6" r="2.3"/><circle cx="322.3" cy="216.6" r="2.3"/><circle cx="244.2" cy="215.2" r="2.3"/><circle cx="229.6" cy="227.2" r="2.3"/><circle cx="343.8" cy="222.2" r="2.3"/><circle cx="345.4" cy="256.4" r="2.3"/><circle cx="304.5" cy="296.2" r="2.3"/><circle cx="221.4" cy="465.2" r="2.3"/><circle cx="195.4" cy="321.5" r="2.3"/><circle cx="194.9" cy="325.3" r="2.3"/><circle cx="227.2" cy="467.7" r="2.3"/><circle cx="248.8" cy="329.1" r="2.3"/><circle cx="369.3" cy="343.2" r="2.3"/><circle cx="307.8" cy="261.2" r="2.3"/><circle cx="311.7" cy="299.3" r="2.3"/><circle cx="199.1" cy="221.3" r="2.3"/><circle cx="267.5" cy="316.2" r="2.3"/><circle cx="308.3" cy="260.0" r="2.3"/><circle cx="345.4" cy="250.3" r="2.3"/><circle cx="205.9" cy="328.0" r="2.3"/><circle cx="170.5" cy="246.2" r="2.3"/><circle cx="227.1" cy="222.8" r="2.3"/><circle cx="255.9" cy="321.3" r="2.3"/><circle cx="156.6" cy="220.8" r="2.3"/><circle cx="439.5" cy="384.6" r="2.3"/><circle cx="218.6" cy="246.8" r="2.3"/><circle cx="213.4" cy="237.7" r="2.3"/><circle cx="165.7" cy="218.3" r="2.3"/><circle cx="204.7" cy="225.7" r="2.3"/><circle cx="273.4" cy="331.9" r="2.3"/><circle cx="251.9" cy="234.1" r="2.3"/><circle cx="367.4" cy="358.7" r="2.3"/><circle cx="230.1" cy="458.0" r="2.3"/><circle cx="370.9" cy="354.7" r="2.3"/><circle cx="310.3" cy="268.8" r="2.3"/><circle cx="304.9" cy="279.4" r="2.3"/><circle cx="161.9" cy="302.1" r="2.3"/><circle cx="198.8" cy="316.4" r="2.3"/><circle cx="360.6" cy="215.2" r="2.3"/><circle cx="170.4" cy="324.3" r="2.3"/><circle cx="247.2" cy="322.5" r="2.3"/><circle cx="156.9" cy="291.3" r="2.3"/><circle cx="333.0" cy="258.6" r="2.3"/><circle cx="460.2" cy="294.6" r="2.3"/><circle cx="358.9" cy="211.6" r="2.3"/><circle cx="277.3" cy="293.3" r="2.3"/><circle cx="321.3" cy="264.4" r="2.3"/><circle cx="270.8" cy="313.5" r="2.3"/><circle cx="257.1" cy="327.6" r="2.3"/><circle cx="299.4" cy="288.7" r="2.3"/><circle cx="194.2" cy="332.3" r="2.3"/><circle cx="340.0" cy="270.3" r="2.3"/><circle cx="249.4" cy="209.0" r="2.3"/><circle cx="339.8" cy="217.9" r="2.3"/><circle cx="418.5" cy="422.5" r="2.3"/><circle cx="261.4" cy="439.9" r="2.3"/><circle cx="187.8" cy="338.7" r="2.3"/><circle cx="236.7" cy="210.2" r="2.3"/><circle cx="267.7" cy="428.6" r="2.3"/><circle cx="221.7" cy="209.3" r="2.3"/><circle cx="334.7" cy="258.4" r="2.3"/><circle cx="191.0" cy="323.9" r="2.3"/><circle cx="201.4" cy="262.3" r="2.3"/><circle cx="361.7" cy="209.8" r="2.3"/><circle cx="346.6" cy="227.2" r="2.3"/><circle cx="239.7" cy="235.1" r="2.3"/><circle cx="312.2" cy="233.1" r="2.3"/><circle cx="275.2" cy="331.4" r="2.3"/><circle cx="271.9" cy="422.5" r="2.3"/><circle cx="239.1" cy="215.4" r="2.3"/><circle cx="338.9" cy="255.0" r="2.3"/><circle cx="334.2" cy="266.9" r="2.3"/><circle cx="320.5" cy="243.7" r="2.3"/><circle cx="173.6" cy="303.7" r="2.3"/><circle cx="234.5" cy="320.8" r="2.3"/><circle cx="342.5" cy="282.5" r="2.3"/><circle cx="215.3" cy="243.3" r="2.3"/><circle cx="247.5" cy="245.7" r="2.3"/><circle cx="342.5" cy="345.6" r="2.3"/><circle cx="277.4" cy="318.8" r="2.3"/><circle cx="267.0" cy="313.3" r="2.3"/><circle cx="209.5" cy="250.0" r="2.3"/><circle cx="384.4" cy="285.7" r="2.3"/><circle cx="350.5" cy="227.5" r="2.3"/><circle cx="341.8" cy="217.5" r="2.3"/><circle cx="362.3" cy="364.6" r="2.3"/><circle cx="164.7" cy="227.9" r="2.3"/><circle cx="336.3" cy="273.5" r="2.3"/><circle cx="185.7" cy="249.4" r="2.3"/><circle cx="197.2" cy="319.2" r="2.3"/><circle cx="236.1" cy="245.2" r="2.3"/><circle cx="263.7" cy="230.8" r="2.3"/><circle cx="200.7" cy="325.4" r="2.3"/><circle cx="163.4" cy="311.6" r="2.3"/><circle cx="216.1" cy="468.3" r="2.3"/><circle cx="164.8" cy="235.4" r="2.3"/><circle cx="329.4" cy="280.5" r="2.3"/><circle cx="272.9" cy="333.1" r="2.3"/><circle cx="308.1" cy="278.5" r="2.3"/><circle cx="209.7" cy="363.0" r="2.3"/><circle cx="168.5" cy="241.0" r="2.3"/><circle cx="172.1" cy="296.0" r="2.3"/><circle cx="329.8" cy="292.9" r="2.3"/><circle cx="373.1" cy="342.9" r="2.3"/><circle cx="211.8" cy="258.3" r="2.3"/><circle cx="220.6" cy="455.0" r="2.3"/><circle cx="336.4" cy="282.9" r="2.3"/><circle cx="189.8" cy="224.7" r="2.3"/><circle cx="230.8" cy="223.7" r="2.3"/><circle cx="302.3" cy="269.2" r="2.3"/><circle cx="169.6" cy="296.5" r="2.3"/><circle cx="345.4" cy="284.6" r="2.3"/><circle cx="198.2" cy="296.0" r="2.3"/><circle cx="220.4" cy="210.3" r="2.3"/><circle cx="204.8" cy="228.5" r="2.3"/><circle cx="161.6" cy="221.6" r="2.3"/><circle cx="243.3" cy="244.7" r="2.3"/><circle cx="435.4" cy="382.1" r="2.3"/><circle cx="326.0" cy="235.5" r="2.3"/><circle cx="307.2" cy="233.7" r="2.3"/><circle cx="187.2" cy="311.5" r="2.3"/><circle cx="200.0" cy="289.8" r="2.3"/><circle cx="182.3" cy="268.3" r="2.3"/><circle cx="272.8" cy="214.7" r="2.3"/><circle cx="261.5" cy="327.5" r="2.3"/><circle cx="408.2" cy="420.0" r="2.3"/><circle cx="321.0" cy="259.8" r="2.3"/><circle cx="254.1" cy="234.5" r="2.3"/><circle cx="361.8" cy="259.5" r="2.3"/><circle cx="274.4" cy="340.3" r="2.3"/><circle cx="251.9" cy="311.7" r="2.3"/><circle cx="275.0" cy="292.9" r="2.3"/><circle cx="192.1" cy="326.5" r="2.3"/><circle cx="221.1" cy="471.7" r="2.3"/><circle cx="348.7" cy="213.3" r="2.3"/><circle cx="210.3" cy="252.6" r="2.3"/><circle cx="265.0" cy="337.6" r="2.3"/><circle cx="208.6" cy="246.0" r="2.3"/><circle cx="400.2" cy="287.7" r="2.3"/><circle cx="340.8" cy="312.0" r="2.3"/><circle cx="308.4" cy="284.7" r="2.3"/><circle cx="245.8" cy="212.1" r="2.3"/><circle cx="330.9" cy="309.1" r="2.3"/><circle cx="228.0" cy="221.7" r="2.3"/><circle cx="216.2" cy="454.8" r="2.3"/><circle cx="216.3" cy="248.0" r="2.3"/><circle cx="371.8" cy="350.5" r="2.3"/><circle cx="196.8" cy="258.1" r="2.3"/><circle cx="268.4" cy="435.5" r="2.3"/><circle cx="264.5" cy="328.0" r="2.3"/><circle cx="354.7" cy="220.5" r="2.3"/><circle cx="252.6" cy="244.3" r="2.3"/><circle cx="344.7" cy="266.8" r="2.3"/><circle cx="309.7" cy="278.0" r="2.3"/><circle cx="353.4" cy="218.3" r="2.3"/><circle cx="306.0" cy="275.1" r="2.3"/><circle cx="251.7" cy="217.4" r="2.3"/><circle cx="260.4" cy="324.5" r="2.3"/><circle cx="390.2" cy="295.2" r="2.3"/><circle cx="254.6" cy="324.8" r="2.3"/><circle cx="217.3" cy="468.7" r="2.3"/><circle cx="276.8" cy="326.9" r="2.3"/><circle cx="247.5" cy="243.7" r="2.3"/><circle cx="183.0" cy="217.0" r="2.3"/><circle cx="218.6" cy="470.7" r="2.3"/><circle cx="179.4" cy="317.9" r="2.3"/><circle cx="236.8" cy="215.0" r="2.3"/><circle cx="169.7" cy="232.8" r="2.3"/><circle cx="299.3" cy="266.5" r="2.3"/><circle cx="367.4" cy="462.3" r="2.3"/><circle cx="258.1" cy="244.6" r="2.3"/><circle cx="246.6" cy="323.7" r="2.3"/><circle cx="308.5" cy="238.6" r="2.3"/><circle cx="212.5" cy="245.4" r="2.3"/><circle cx="224.7" cy="218.5" r="2.3"/><circle cx="308.9" cy="272.9" r="2.3"/><circle cx="348.0" cy="301.2" r="2.3"/><circle cx="333.1" cy="404.4" r="2.3"/><circle cx="300.2" cy="294.6" r="2.3"/><circle cx="177.2" cy="300.0" r="2.3"/><circle cx="372.0" cy="364.3" r="2.3"/><circle cx="155.0" cy="314.2" r="2.3"/><circle cx="261.1" cy="325.8" r="2.3"/><circle cx="172.5" cy="304.9" r="2.3"/><circle cx="191.4" cy="226.2" r="2.3"/><circle cx="325.7" cy="329.9" r="2.3"/><circle cx="225.9" cy="454.1" r="2.3"/><circle cx="153.9" cy="297.0" r="2.3"/><circle cx="267.2" cy="329.0" r="2.3"/><circle cx="385.2" cy="369.1" r="2.3"/><circle cx="331.2" cy="342.3" r="2.3"/><circle cx="345.9" cy="214.2" r="2.3"/><circle cx="175.8" cy="300.3" r="2.3"/><circle cx="217.7" cy="215.3" r="2.3"/><circle cx="367.4" cy="465.5" r="2.3"/><circle cx="209.3" cy="308.4" r="2.3"/><circle cx="192.0" cy="313.8" r="2.3"/><circle cx="367.7" cy="353.2" r="2.3"/><circle cx="209.2" cy="216.2" r="2.3"/><circle cx="234.0" cy="211.0" r="2.3"/><circle cx="369.8" cy="215.5" r="2.3"/><circle cx="172.9" cy="302.6" r="2.3"/><circle cx="159.6" cy="301.1" r="2.3"/><circle cx="259.5" cy="338.2" r="2.3"/><circle cx="324.9" cy="227.0" r="2.3"/><circle cx="170.4" cy="327.6" r="2.3"/><circle cx="366.3" cy="343.0" r="2.3"/><circle cx="205.0" cy="257.9" r="2.3"/><circle cx="230.4" cy="220.4" r="2.3"/><circle cx="268.8" cy="219.8" r="2.3"/><circle cx="179.6" cy="323.1" r="2.3"/><circle cx="350.5" cy="210.0" r="2.3"/><circle cx="206.3" cy="253.5" r="2.3"/><circle cx="216.5" cy="253.4" r="2.3"/><circle cx="182.1" cy="260.2" r="2.3"/><circle cx="319.9" cy="274.1" r="2.3"/><circle cx="199.7" cy="320.1" r="2.3"/><circle cx="190.4" cy="327.1" r="2.3"/><circle cx="321.9" cy="213.5" r="2.3"/><circle cx="182.9" cy="220.7" r="2.3"/><circle cx="365.7" cy="220.4" r="2.3"/><circle cx="284.1" cy="321.3" r="2.3"/><circle cx="268.8" cy="214.8" r="2.3"/><circle cx="348.5" cy="225.4" r="2.3"/><circle cx="364.1" cy="356.8" r="2.3"/><circle cx="175.0" cy="243.4" r="2.3"/><circle cx="324.7" cy="264.0" r="2.3"/><circle cx="195.5" cy="260.4" r="2.3"/><circle cx="333.0" cy="255.3" r="2.3"/><circle cx="362.3" cy="262.5" r="2.3"/><circle cx="176.6" cy="241.4" r="2.3"/><circle cx="363.9" cy="219.4" r="2.3"/><circle cx="183.8" cy="243.9" r="2.3"/><circle cx="210.4" cy="296.9" r="2.3"/><circle cx="223.3" cy="454.0" r="2.3"/><circle cx="169.0" cy="243.0" r="2.3"/><circle cx="302.6" cy="285.2" r="2.3"/><circle cx="221.1" cy="469.0" r="2.3"/><circle cx="208.8" cy="229.1" r="2.3"/><circle cx="325.3" cy="279.4" r="2.3"/><circle cx="224.9" cy="464.2" r="2.3"/><circle cx="375.6" cy="346.2" r="2.3"/><circle cx="318.6" cy="235.0" r="2.3"/><circle cx="276.4" cy="339.8" r="2.3"/><circle cx="338.7" cy="260.0" r="2.3"/><circle cx="257.8" cy="243.3" r="2.3"/><circle cx="252.3" cy="319.3" r="2.3"/><circle cx="315.6" cy="267.3" r="2.3"/><circle cx="196.6" cy="218.4" r="2.3"/><circle cx="357.6" cy="221.0" r="2.3"/><circle cx="189.2" cy="240.7" r="2.3"/><circle cx="327.9" cy="370.5" r="2.3"/><circle cx="418.6" cy="433.8" r="2.3"/><circle cx="368.6" cy="273.3" r="2.3"/><circle cx="416.3" cy="353.1" r="2.3"/><circle cx="341.6" cy="222.7" r="2.3"/><circle cx="359.1" cy="239.8" r="2.3"/><circle cx="210.6" cy="293.2" r="2.3"/><circle cx="240.0" cy="320.0" r="2.3"/><circle cx="321.6" cy="273.6" r="2.3"/><circle cx="158.3" cy="300.2" r="2.3"/><circle cx="369.2" cy="218.8" r="2.3"/><circle cx="205.7" cy="315.4" r="2.3"/><circle cx="425.9" cy="374.7" r="2.3"/><circle cx="308.8" cy="288.0" r="2.3"/><circle cx="399.2" cy="347.8" r="2.3"/><circle cx="247.9" cy="222.1" r="2.3"/><circle cx="253.5" cy="231.7" r="2.3"/><circle cx="268.5" cy="325.0" r="2.3"/><circle cx="324.8" cy="218.1" r="2.3"/><circle cx="367.9" cy="271.2" r="2.3"/><circle cx="200.1" cy="322.9" r="2.3"/><circle cx="182.1" cy="239.7" r="2.3"/><circle cx="208.5" cy="225.0" r="2.3"/><circle cx="350.5" cy="261.1" r="2.3"/><circle cx="318.4" cy="270.8" r="2.3"/><circle cx="315.1" cy="269.7" r="2.3"/><circle cx="173.3" cy="305.3" r="2.3"/><circle cx="305.3" cy="293.9" r="2.3"/><circle cx="172.4" cy="317.5" r="2.3"/><circle cx="302.8" cy="265.1" r="2.3"/><circle cx="337.8" cy="282.5" r="2.3"/><circle cx="181.2" cy="216.3" r="2.3"/><circle cx="208.4" cy="258.6" r="2.3"/><circle cx="327.9" cy="293.7" r="2.3"/><circle cx="255.2" cy="236.0" r="2.3"/><circle cx="307.1" cy="237.1" r="2.3"/><circle cx="179.7" cy="256.8" r="2.3"/><circle cx="338.6" cy="253.0" r="2.3"/><circle cx="276.9" cy="313.3" r="2.3"/><circle cx="323.3" cy="269.3" r="2.3"/><circle cx="356.6" cy="224.6" r="2.3"/><circle cx="315.9" cy="265.4" r="2.3"/><circle cx="307.7" cy="268.1" r="2.3"/><circle cx="243.8" cy="226.0" r="2.3"/><circle cx="157.3" cy="289.4" r="2.3"/><circle cx="202.8" cy="272.3" r="2.3"/><circle cx="173.1" cy="301.4" r="2.3"/><circle cx="360.0" cy="359.0" r="2.3"/><circle cx="209.0" cy="242.9" r="2.3"/><circle cx="226.4" cy="460.3" r="2.3"/><circle cx="254.6" cy="334.2" r="2.3"/><circle cx="316.1" cy="275.9" r="2.3"/><circle cx="393.4" cy="349.4" r="2.3"/><circle cx="313.9" cy="286.1" r="2.3"/><circle cx="184.1" cy="253.5" r="2.3"/><circle cx="260.0" cy="213.2" r="2.3"/><circle cx="309.8" cy="276.5" r="2.3"/><circle cx="242.3" cy="209.4" r="2.3"/><circle cx="221.2" cy="456.7" r="2.3"/><circle cx="177.4" cy="234.6" r="2.3"/><circle cx="155.9" cy="311.5" r="2.3"/><circle cx="276.1" cy="323.3" r="2.3"/><circle cx="174.7" cy="298.5" r="2.3"/><circle cx="334.7" cy="269.9" r="2.3"/><circle cx="196.0" cy="334.2" r="2.3"/><circle cx="181.2" cy="258.9" r="2.3"/><circle cx="361.0" cy="220.2" r="2.3"/><circle cx="205.8" cy="320.5" r="2.3"/><circle cx="223.5" cy="455.8" r="2.3"/><circle cx="155.3" cy="307.5" r="2.3"/><circle cx="255.7" cy="439.9" r="2.3"/><circle cx="199.7" cy="259.3" r="2.3"/><circle cx="164.5" cy="303.3" r="2.3"/><circle cx="320.5" cy="458.0" r="2.3"/><circle cx="300.5" cy="272.9" r="2.3"/><circle cx="345.4" cy="218.2" r="2.3"/><circle cx="264.1" cy="322.2" r="2.3"/><circle cx="301.9" cy="263.0" r="2.3"/><circle cx="439.5" cy="376.3" r="2.3"/><circle cx="187.2" cy="241.9" r="2.3"/><circle cx="218.8" cy="259.1" r="2.3"/><circle cx="199.8" cy="277.7" r="2.3"/><circle cx="323.3" cy="279.9" r="2.3"/><circle cx="338.3" cy="257.8" r="2.3"/><circle cx="171.9" cy="308.1" r="2.3"/><circle cx="257.1" cy="333.5" r="2.3"/><circle cx="305.8" cy="264.6" r="2.3"/><circle cx="180.6" cy="238.0" r="2.3"/><circle cx="229.1" cy="455.8" r="2.3"/><circle cx="307.8" cy="270.7" r="2.3"/><circle cx="237.1" cy="223.4" r="2.3"/><circle cx="181.7" cy="213.1" r="2.3"/><circle cx="388.4" cy="348.1" r="2.3"/><circle cx="171.4" cy="253.0" r="2.3"/><circle cx="342.5" cy="277.4" r="2.3"/><circle cx="186.5" cy="312.9" r="2.3"/><circle cx="363.4" cy="361.8" r="2.3"/><circle cx="159.6" cy="234.9" r="2.3"/><circle cx="248.4" cy="313.8" r="2.3"/><circle cx="303.4" cy="270.5" r="2.3"/><circle cx="217.0" cy="466.6" r="2.3"/><circle cx="369.3" cy="268.4" r="2.3"/><circle cx="325.3" cy="262.2" r="2.3"/><circle cx="198.6" cy="288.3" r="2.3"/><circle cx="174.8" cy="216.6" r="2.3"/><circle cx="336.8" cy="250.9" r="2.3"/><circle cx="327.4" cy="273.4" r="2.3"/><circle cx="346.7" cy="216.4" r="2.3"/><circle cx="206.0" cy="265.7" r="2.3"/><circle cx="227.0" cy="210.0" r="2.3"/><circle cx="200.1" cy="280.3" r="2.3"/><circle cx="372.1" cy="210.4" r="2.3"/><circle cx="362.2" cy="268.6" r="2.3"/><circle cx="153.0" cy="307.2" r="2.3"/><circle cx="176.9" cy="308.3" r="2.3"/><circle cx="199.4" cy="329.0" r="2.3"/><circle cx="261.4" cy="413.1" r="2.3"/><circle cx="321.5" cy="222.4" r="2.3"/><circle cx="170.9" cy="244.7" r="2.3"/><circle cx="182.8" cy="362.2" r="2.3"/><circle cx="216.3" cy="463.6" r="2.3"/><circle cx="214.8" cy="443.9" r="2.3"/><circle cx="210.6" cy="250.8" r="2.3"/><circle cx="314.0" cy="240.0" r="2.3"/><circle cx="330.6" cy="264.1" r="2.3"/><circle cx="406.8" cy="362.7" r="2.3"/><circle cx="262.8" cy="421.1" r="2.3"/><circle cx="196.4" cy="300.3" r="2.3"/><circle cx="204.4" cy="274.9" r="2.3"/><circle cx="405.4" cy="452.5" r="2.3"/><circle cx="237.8" cy="232.0" r="2.3"/><circle cx="376.7" cy="358.8" r="2.3"/><circle cx="184.9" cy="306.9" r="2.3"/><circle cx="149.1" cy="219.1" r="2.3"/><circle cx="346.8" cy="267.3" r="2.3"/><circle cx="340.0" cy="285.7" r="2.3"/><circle cx="274.9" cy="215.7" r="2.3"/><circle cx="420.8" cy="357.6" r="2.3"/><circle cx="349.5" cy="229.6" r="2.3"/><circle cx="383.1" cy="339.0" r="2.3"/><circle cx="198.1" cy="269.7" r="2.3"/><circle cx="262.3" cy="216.1" r="2.3"/><circle cx="247.5" cy="231.3" r="2.3"/><circle cx="189.7" cy="315.8" r="2.3"/><circle cx="210.1" cy="213.8" r="2.3"/><circle cx="256.4" cy="324.1" r="2.3"/><circle cx="229.8" cy="214.1" r="2.3"/><circle cx="170.3" cy="304.6" r="2.3"/><circle cx="265.0" cy="222.8" r="2.3"/><circle cx="318.8" cy="226.1" r="2.3"/><circle cx="184.1" cy="224.9" r="2.3"/><circle cx="200.5" cy="254.3" r="2.3"/><circle cx="331.9" cy="270.0" r="2.3"/><circle cx="218.3" cy="252.9" r="2.3"/><circle cx="361.7" cy="266.8" r="2.3"/><circle cx="248.0" cy="387.1" r="2.3"/><circle cx="180.2" cy="245.7" r="2.3"/><circle cx="207.7" cy="254.1" r="2.3"/><circle cx="216.0" cy="252.2" r="2.3"/><circle cx="244.4" cy="222.0" r="2.3"/><circle cx="336.6" cy="253.4" r="2.3"/><circle cx="213.0" cy="266.7" r="2.3"/><circle cx="412.3" cy="295.0" r="2.3"/><circle cx="168.2" cy="296.1" r="2.3"/><circle cx="299.4" cy="456.6" r="2.3"/><circle cx="246.2" cy="237.3" r="2.3"/><circle cx="170.0" cy="240.2" r="2.3"/><circle cx="153.7" cy="293.0" r="2.3"/><circle cx="378.8" cy="360.2" r="2.3"/><circle cx="170.8" cy="300.8" r="2.3"/><circle cx="194.6" cy="311.4" r="2.3"/><circle cx="204.7" cy="348.9" r="2.3"/><circle cx="204.3" cy="316.6" r="2.3"/><circle cx="367.7" cy="351.4" r="2.3"/><circle cx="297.3" cy="278.3" r="2.3"/><circle cx="201.2" cy="291.8" r="2.3"/><circle cx="153.5" cy="304.6" r="2.3"/><circle cx="182.6" cy="283.8" r="2.3"/><circle cx="178.6" cy="241.3" r="2.3"/><circle cx="365.3" cy="358.2" r="2.3"/><circle cx="360.8" cy="355.7" r="2.3"/><circle cx="201.0" cy="300.4" r="2.3"/><circle cx="185.8" cy="269.1" r="2.3"/><circle cx="339.5" cy="284.6" r="2.3"/><circle cx="193.6" cy="294.8" r="2.3"/><circle cx="164.2" cy="314.8" r="2.3"/><circle cx="191.4" cy="328.7" r="2.3"/><circle cx="353.7" cy="262.0" r="2.3"/><circle cx="254.8" cy="322.9" r="2.3"/><circle cx="347.0" cy="413.6" r="2.3"/><circle cx="331.2" cy="365.5" r="2.3"/><circle cx="184.6" cy="241.8" r="2.3"/><circle cx="278.9" cy="300.6" r="2.3"/><circle cx="152.3" cy="295.1" r="2.3"/><circle cx="207.0" cy="267.1" r="2.3"/><circle cx="329.8" cy="302.8" r="2.3"/><circle cx="354.9" cy="281.6" r="2.3"/><circle cx="159.6" cy="227.7" r="2.3"/><circle cx="194.8" cy="330.1" r="2.3"/><circle cx="218.1" cy="257.2" r="2.3"/><circle cx="272.9" cy="340.2" r="2.3"/><circle cx="195.6" cy="253.7" r="2.3"/><circle cx="279.5" cy="326.6" r="2.3"/><circle cx="192.7" cy="302.2" r="2.3"/><circle cx="205.3" cy="260.7" r="2.3"/><circle cx="262.2" cy="219.4" r="2.3"/><circle cx="213.8" cy="351.4" r="2.3"/><circle cx="457.1" cy="311.2" r="2.3"/><circle cx="233.3" cy="233.8" r="2.3"/><circle cx="319.7" cy="240.1" r="2.3"/><circle cx="358.0" cy="257.1" r="2.3"/><circle cx="259.1" cy="329.0" r="2.3"/><circle cx="215.9" cy="211.3" r="2.3"/><circle cx="152.2" cy="299.1" r="2.3"/><circle cx="243.0" cy="239.9" r="2.3"/><circle cx="399.7" cy="416.2" r="2.3"/><circle cx="334.9" cy="273.3" r="2.3"/><circle cx="256.1" cy="232.8" r="2.3"/><circle cx="203.8" cy="212.2" r="2.3"/><circle cx="266.2" cy="310.8" r="2.3"/><circle cx="334.0" cy="284.2" r="2.3"/><circle cx="347.2" cy="224.6" r="2.3"/><circle cx="327.1" cy="305.0" r="2.3"/><circle cx="345.8" cy="266.2" r="2.3"/><circle cx="314.5" cy="268.2" r="2.3"/><circle cx="278.5" cy="346.5" r="2.3"/><circle cx="304.6" cy="266.4" r="2.3"/><circle cx="184.8" cy="250.7" r="2.3"/><circle cx="261.9" cy="318.6" r="2.3"/><circle cx="365.4" cy="341.7" r="2.3"/><circle cx="272.9" cy="321.3" r="2.3"/><circle cx="199.1" cy="291.4" r="2.3"/><circle cx="300.6" cy="287.1" r="2.3"/><circle cx="342.3" cy="212.8" r="2.3"/><circle cx="339.4" cy="257.0" r="2.3"/><circle cx="213.5" cy="304.6" r="2.3"/><circle cx="250.1" cy="404.6" r="2.3"/><circle cx="155.0" cy="322.4" r="2.3"/><circle cx="234.6" cy="241.9" r="2.3"/><circle cx="205.6" cy="250.6" r="2.3"/><circle cx="341.9" cy="215.9" r="2.3"/><circle cx="297.7" cy="275.9" r="2.3"/><circle cx="328.6" cy="272.6" r="2.3"/><circle cx="265.5" cy="329.9" r="2.3"/><circle cx="245.1" cy="228.7" r="2.3"/><circle cx="347.1" cy="213.7" r="2.3"/><circle cx="305.6" cy="255.6" r="2.3"/><circle cx="200.8" cy="330.8" r="2.3"/><circle cx="195.9" cy="304.0" r="2.3"/><circle cx="189.0" cy="325.6" r="2.3"/><circle cx="152.6" cy="290.3" r="2.3"/><circle cx="203.8" cy="291.2" r="2.3"/><circle cx="310.2" cy="270.1" r="2.3"/><circle cx="195.2" cy="255.9" r="2.3"/><circle cx="312.0" cy="284.2" r="2.3"/><circle cx="321.7" cy="218.9" r="2.3"/><circle cx="280.4" cy="303.0" r="2.3"/><circle cx="420.8" cy="364.4" r="2.3"/><circle cx="230.5" cy="244.2" r="2.3"/><circle cx="353.0" cy="209.1" r="2.3"/><circle cx="377.3" cy="366.9" r="2.3"/><circle cx="372.3" cy="221.0" r="2.3"/><circle cx="342.1" cy="286.5" r="2.3"/><circle cx="419.6" cy="295.9" r="2.3"/><circle cx="256.3" cy="223.5" r="2.3"/><circle cx="251.9" cy="392.4" r="2.3"/><circle cx="356.5" cy="220.3" r="2.3"/><circle cx="313.9" cy="282.8" r="2.3"/><circle cx="341.8" cy="226.0" r="2.3"/><circle cx="313.7" cy="300.6" r="2.3"/><circle cx="226.1" cy="452.3" r="2.3"/><circle cx="258.5" cy="221.9" r="2.3"/><circle cx="160.7" cy="302.6" r="2.3"/><circle cx="272.0" cy="304.5" r="2.3"/><circle cx="269.4" cy="309.6" r="2.3"/><circle cx="247.7" cy="224.6" r="2.3"/><circle cx="232.7" cy="401.8" r="2.3"/><circle cx="175.0" cy="255.8" r="2.3"/><circle cx="308.4" cy="231.8" r="2.3"/><circle cx="202.2" cy="356.4" r="2.3"/><circle cx="363.0" cy="261.5" r="2.3"/><circle cx="439.5" cy="391.2" r="2.3"/><circle cx="268.9" cy="334.8" r="2.3"/><circle cx="353.8" cy="216.8" r="2.3"/><circle cx="368.5" cy="210.3" r="2.3"/><circle cx="355.6" cy="215.4" r="2.3"/><circle cx="213.5" cy="288.7" r="2.3"/><circle cx="262.6" cy="332.5" r="2.3"/><circle cx="199.9" cy="296.5" r="2.3"/><circle cx="327.1" cy="264.9" r="2.3"/><circle cx="196.7" cy="316.1" r="2.3"/><circle cx="207.9" cy="303.8" r="2.3"/><circle cx="178.2" cy="326.7" r="2.3"/><circle cx="174.0" cy="286.3" r="2.3"/><circle cx="303.4" cy="289.5" r="2.3"/><circle cx="274.9" cy="294.7" r="2.3"/><circle cx="245.0" cy="223.8" r="2.3"/><circle cx="337.8" cy="261.4" r="2.3"/><circle cx="190.1" cy="231.8" r="2.3"/><circle cx="266.4" cy="210.5" r="2.3"/><circle cx="244.7" cy="241.9" r="2.3"/><circle cx="367.6" cy="220.4" r="2.3"/><circle cx="410.3" cy="290.5" r="2.3"/><circle cx="233.2" cy="243.6" r="2.3"/><circle cx="206.0" cy="271.3" r="2.3"/><circle cx="429.8" cy="407.0" r="2.3"/><circle cx="235.0" cy="455.6" r="2.3"/><circle cx="224.4" cy="457.8" r="2.3"/><circle cx="168.8" cy="297.7" r="2.3"/><circle cx="191.0" cy="305.2" r="2.3"/><circle cx="212.7" cy="287.4" r="2.3"/><circle cx="263.6" cy="222.6" r="2.3"/><circle cx="200.9" cy="257.8" r="2.3"/><circle cx="195.1" cy="227.6" r="2.3"/><circle cx="259.8" cy="233.9" r="2.3"/><circle cx="185.9" cy="224.9" r="2.3"/><circle cx="357.0" cy="209.2" r="2.3"/><circle cx="223.3" cy="223.9" r="2.3"/><circle cx="194.2" cy="318.4" r="2.3"/><circle cx="176.2" cy="236.9" r="2.3"/><circle cx="308.0" cy="236.1" r="2.3"/><circle cx="256.1" cy="328.6" r="2.3"/><circle cx="337.8" cy="212.9" r="2.3"/><circle cx="232.5" cy="209.2" r="2.3"/><circle cx="370.5" cy="355.9" r="2.3"/><circle cx="194.7" cy="214.8" r="2.3"/><circle cx="181.2" cy="268.7" r="2.3"/><circle cx="209.6" cy="226.1" r="2.3"/><circle cx="178.8" cy="235.2" r="2.3"/><circle cx="170.0" cy="317.2" r="2.3"/><circle cx="370.3" cy="344.7" r="2.3"/><circle cx="251.0" cy="317.4" r="2.3"/><circle cx="367.6" cy="346.3" r="2.3"/><circle cx="311.5" cy="238.9" r="2.3"/><circle cx="259.7" cy="321.5" r="2.3"/><circle cx="353.6" cy="258.6" r="2.3"/><circle cx="193.0" cy="226.0" r="2.3"/><circle cx="277.2" cy="299.9" r="2.3"/><circle cx="186.7" cy="269.9" r="2.3"/><circle cx="163.0" cy="331.5" r="2.3"/><circle cx="207.4" cy="214.1" r="2.3"/><circle cx="273.0" cy="326.7" r="2.3"/><circle cx="228.6" cy="243.8" r="2.3"/><circle cx="260.1" cy="235.8" r="2.3"/><circle cx="182.7" cy="248.9" r="2.3"/><circle cx="317.2" cy="270.7" r="2.3"/><circle cx="216.2" cy="220.1" r="2.3"/><circle cx="197.2" cy="222.3" r="2.3"/><circle cx="361.7" cy="263.6" r="2.3"/><circle cx="412.6" cy="383.3" r="2.3"/><circle cx="235.6" cy="218.9" r="2.3"/><circle cx="249.9" cy="219.0" r="2.3"/><circle cx="323.3" cy="355.6" r="2.3"/><circle cx="160.0" cy="313.4" r="2.3"/><circle cx="433.7" cy="377.6" r="2.3"/><circle cx="260.6" cy="318.7" r="2.3"/><circle cx="247.8" cy="227.3" r="2.3"/><circle cx="271.0" cy="220.3" r="2.3"/><circle cx="337.8" cy="339.0" r="2.3"/><circle cx="306.1" cy="277.7" r="2.3"/><circle cx="353.7" cy="268.7" r="2.3"/></g>
</svg>

<!-- right panel sliver -->
<div class="abs" style="left:731px;top:29px;width:4px;height:20px;border:1px solid #b2b2b2;background:#e4e4e4;box-sizing:border-box;"></div>
<div class="abs" style="left:731px;top:51px;width:4px;height:107px;border:1px solid #6b7386;background:#fff;box-sizing:border-box;"></div>
<div class="abs" style="left:731px;top:180px;width:3px;height:1px;background:#c4c4c4;"></div>
<div class="abs" style="left:731px;top:182px;width:4px;height:23px;border:1px solid #9c9c9c;background:#e9e9e9;box-sizing:border-box;"></div>
<div class="abs" style="left:731px;top:205px;width:3px;height:18px;background:#d2d2d2;"></div>
<div class="abs" style="left:731px;top:224px;width:4px;height:363px;border:1px solid #6b7386;background:#fff;box-sizing:border-box;"></div>
<div class="abs" style="left:731px;top:592px;width:4px;height:20px;border:1px solid #a8a8a8;background:#e4e4e4;box-sizing:border-box;"></div>
</div></body></html>
